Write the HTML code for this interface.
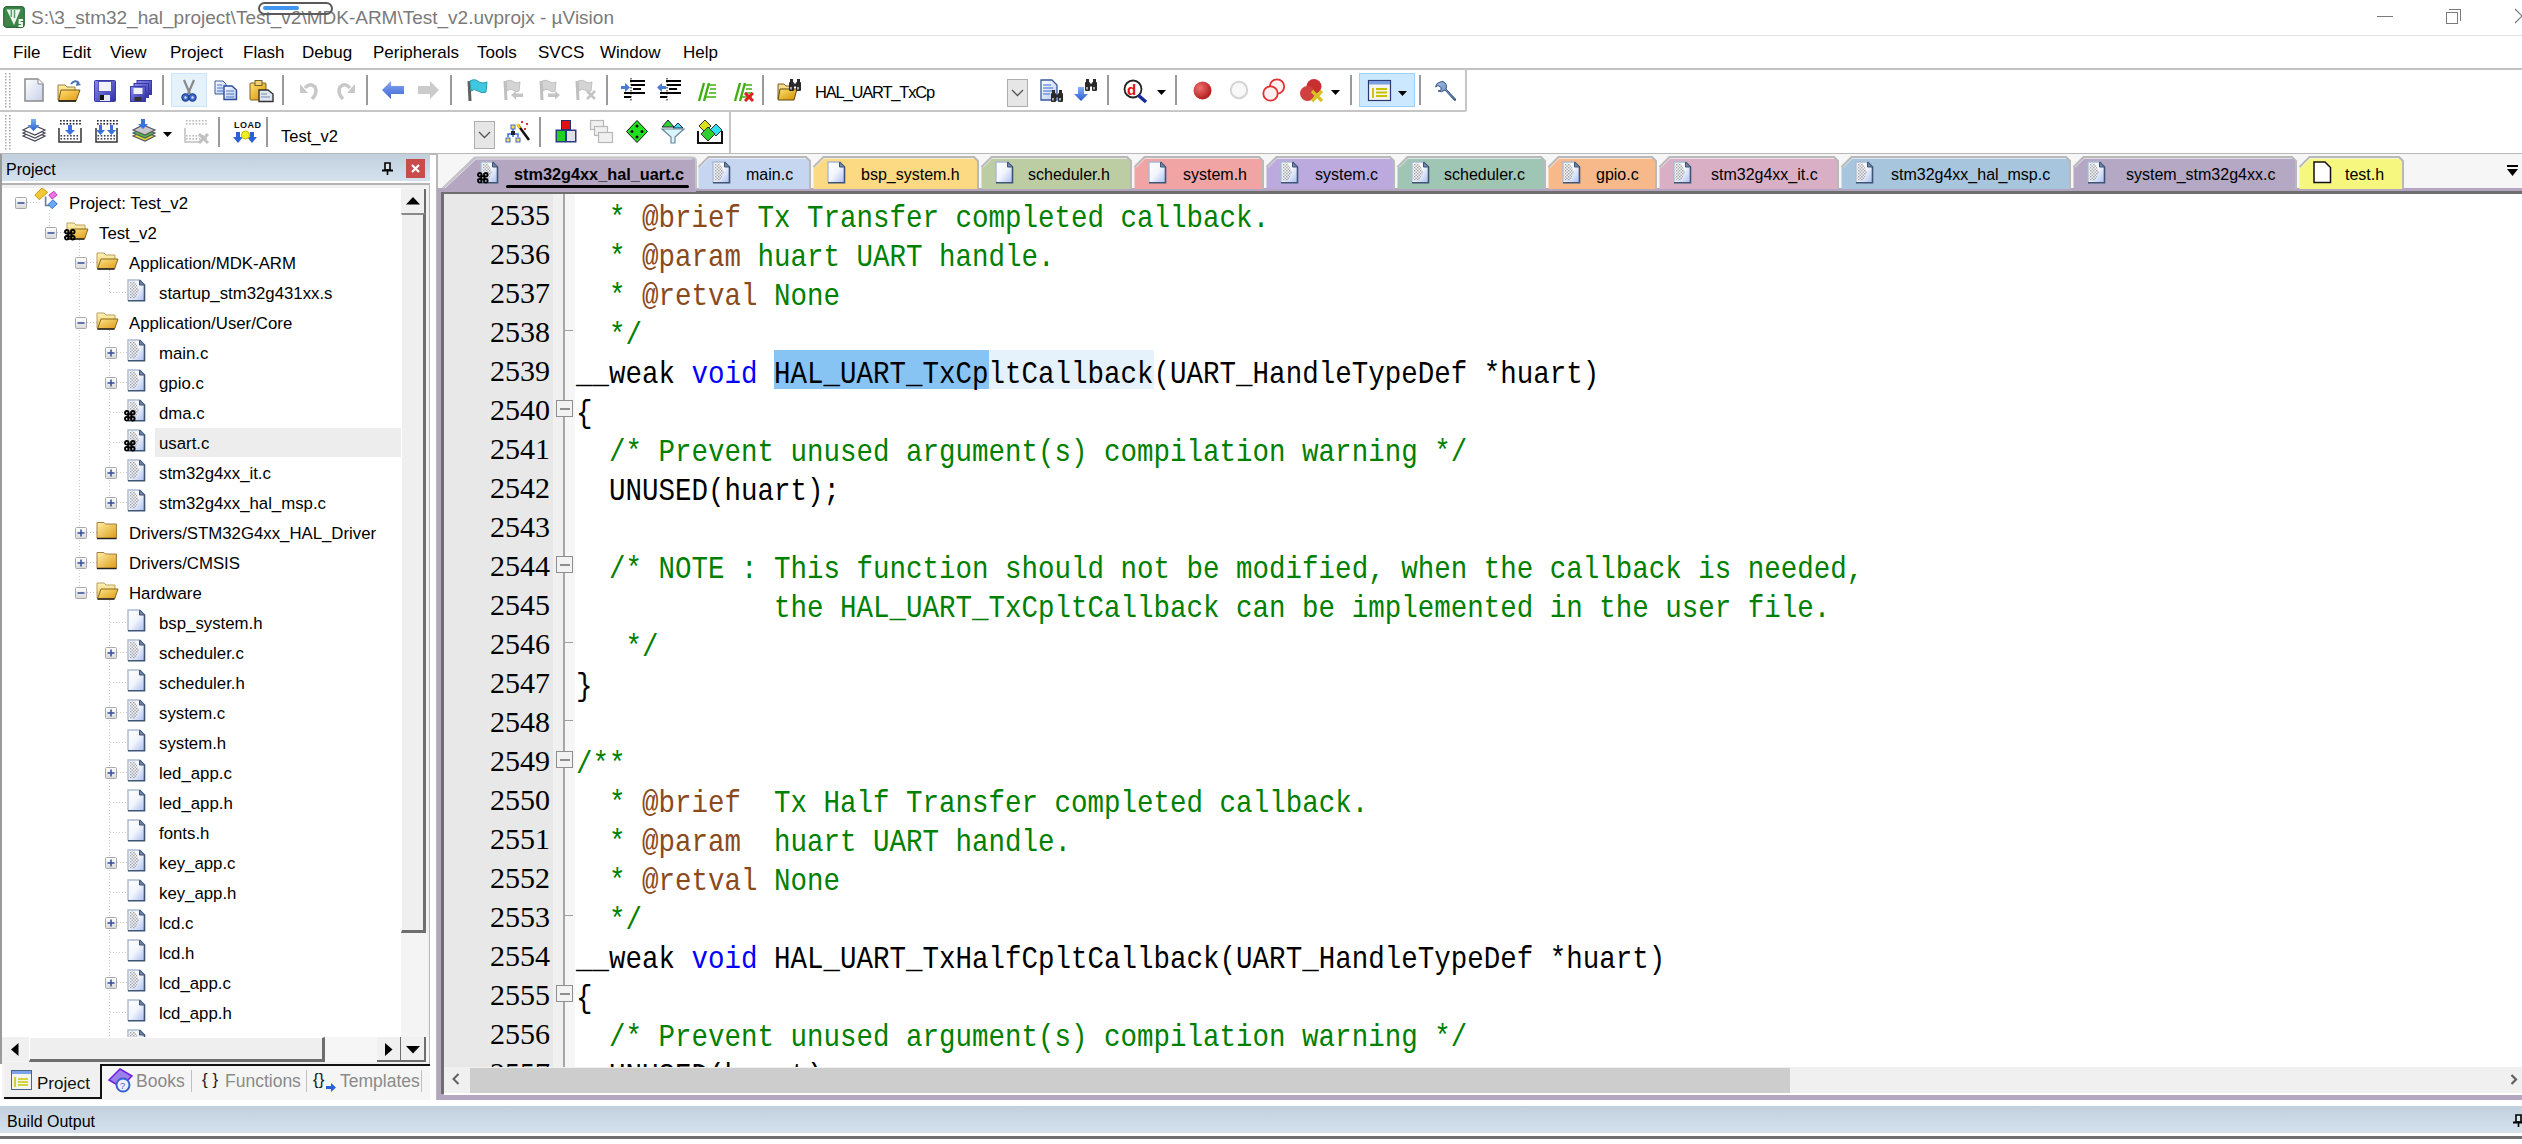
<!DOCTYPE html>
<html><head><meta charset="utf-8"><style>
*{box-sizing:border-box;margin:0;padding:0}
html,body{width:2522px;height:1144px;overflow:hidden;background:#fff}
body{position:relative;font-family:"Liberation Sans",sans-serif;color:#000}
.a{position:absolute}
.t{position:absolute;white-space:pre;line-height:1}
svg{position:absolute;overflow:visible}
.menu span{position:absolute;top:43px;font-size:17px;white-space:pre}
.hdr{background:linear-gradient(#c1cfdd,#d5e2ee)}
.ln{position:absolute;left:444px;width:106px;text-align:right;font-family:"Liberation Serif",serif;font-size:30px;line-height:39px;height:39px;white-space:pre}
.cl{position:absolute;left:576px;font-family:"Liberation Mono",monospace;font-size:30.5px;line-height:39px;height:39px;white-space:pre;transform:scaleX(0.90164);transform-origin:0 0}
.c{color:#008000}.d{color:#8b4a1c}.k{color:#0000ff}
.tr{position:absolute;font-size:16.8px;line-height:1;white-space:pre}
.tab{position:absolute;top:157px;height:32px}
.tabt{position:absolute;top:167px;font-size:16px;white-space:pre;line-height:1}
</style></head><body>
<svg width="0" height="0" style="position:absolute;left:0;top:0"><defs><linearGradient id="dg" x1="0" y1="0" x2="1" y2="1"><stop offset="0" stop-color="#ffffff"/><stop offset="0.5" stop-color="#f2f5fc"/><stop offset="1" stop-color="#a9bdf0"/></linearGradient><linearGradient id="eg" x1="0" y1="0" x2="0" y2="1"><stop offset="0" stop-color="#fff"/><stop offset="1" stop-color="#d8d8d8"/></linearGradient><linearGradient id="fg1" x1="0" y1="0" x2="0" y2="1"><stop offset="0" stop-color="#fff3b8"/><stop offset="1" stop-color="#e7c45c"/></linearGradient><linearGradient id="fg2" x1="0" y1="0" x2="1" y2="1"><stop offset="0" stop-color="#fde58a"/><stop offset="1" stop-color="#dd9a14"/></linearGradient><linearGradient id="fg3" x1="0" y1="0" x2="1" y2="1"><stop offset="0" stop-color="#fff0a8"/><stop offset="1" stop-color="#dd9a14"/></linearGradient><pattern id="dith" patternUnits="userSpaceOnUse" width="3" height="3"><rect x="0" y="0" width="1.4" height="1.4" fill="#a0a0a0"/><rect x="1.5" y="1.5" width="1.4" height="1.4" fill="#a0a0a0"/></pattern></defs></svg>
<div class="a" style="left:0;top:35px;width:2522px;height:1px;background:#e3e3e3"></div>
<svg style="left:3px;top:6px" width="22" height="22" viewBox="0 0 22 22"><rect x="0.7" y="0.7" width="20.6" height="20.6" rx="3" fill="#3a8548" stroke="#2c6a3a" stroke-width="1.2"/><path d="M3.5 3.5 H17.5 L11 19 Z" fill="#eef6ee"/><path d="M8.3 4 V11 M11.5 4 V12" stroke="#5f9f6c" stroke-width="1.5"/><path d="M20 14 H16.5 V17 H19 V20 H15.5" stroke="#f4faf4" stroke-width="1.8" fill="none"/></svg>
<div class="t" style="left:31px;top:8px;font-size:19px;color:#7a7a7a">S:\3_stm32_hal_project\Test_v2\MDK-ARM\Test_v2.uvprojx - µVision</div>
<div class="a" style="left:258px;top:2px;width:75px;height:13px;border:2px solid #5a5a5a;border-radius:7px;background:transparent"></div>
<div class="a" style="left:263px;top:6px;width:36px;height:4px;border-radius:2px;background:#3f96ef"></div>
<div class="a" style="left:2377px;top:16px;width:16px;height:1px;background:#7a7a7a"></div>
<div class="a" style="left:2446px;top:12px;width:12px;height:12px;border:1px solid #7a7a7a"></div>
<div class="a" style="left:2449px;top:9px;width:12px;height:12px;border-top:1px solid #7a7a7a;border-right:1px solid #7a7a7a"></div>
<svg style="left:2514px;top:8px" width="10" height="16"><path d="M1 1 L15 15 M1 15 L15 1" stroke="#7a7a7a" stroke-width="1.2"/></svg>
<div class="menu"><span style="left:13px">File</span><span style="left:62px">Edit</span><span style="left:110px">View</span><span style="left:170px">Project</span><span style="left:243px">Flash</span><span style="left:302px">Debug</span><span style="left:373px">Peripherals</span><span style="left:477px">Tools</span><span style="left:538px">SVCS</span><span style="left:600px">Window</span><span style="left:683px">Help</span></div>
<div class="a" style="left:0;top:68px;width:2522px;height:2px;background:#c2c2c2"></div>
<div class="a" style="left:0;top:110px;width:1466px;height:2px;background:#c6c6c6"></div>
<div class="a" style="left:1465px;top:69px;width:2px;height:42px;background:#c6c6c6"></div>
<div class="a" style="left:729px;top:111px;width:2px;height:42px;background:#c6c6c6"></div>
<div class="a" style="left:0;top:153px;width:2522px;height:2px;background:#b8b8b8"></div>
<svg style="left:5px;top:73px" width="6" height="36" viewBox="0 0 6 36"><rect x="0" y="0" width="1.5" height="1.5" fill="#a8a8a8"/><rect x="0" y="3" width="1.5" height="1.5" fill="#a8a8a8"/><rect x="0" y="6" width="1.5" height="1.5" fill="#a8a8a8"/><rect x="0" y="9" width="1.5" height="1.5" fill="#a8a8a8"/><rect x="0" y="12" width="1.5" height="1.5" fill="#a8a8a8"/><rect x="0" y="15" width="1.5" height="1.5" fill="#a8a8a8"/><rect x="0" y="18" width="1.5" height="1.5" fill="#a8a8a8"/><rect x="0" y="21" width="1.5" height="1.5" fill="#a8a8a8"/><rect x="0" y="24" width="1.5" height="1.5" fill="#a8a8a8"/><rect x="0" y="27" width="1.5" height="1.5" fill="#a8a8a8"/><rect x="0" y="30" width="1.5" height="1.5" fill="#a8a8a8"/><rect x="0" y="33" width="1.5" height="1.5" fill="#a8a8a8"/><rect x="4" y="0" width="1.5" height="1.5" fill="#a8a8a8"/><rect x="4" y="3" width="1.5" height="1.5" fill="#a8a8a8"/><rect x="4" y="6" width="1.5" height="1.5" fill="#a8a8a8"/><rect x="4" y="9" width="1.5" height="1.5" fill="#a8a8a8"/><rect x="4" y="12" width="1.5" height="1.5" fill="#a8a8a8"/><rect x="4" y="15" width="1.5" height="1.5" fill="#a8a8a8"/><rect x="4" y="18" width="1.5" height="1.5" fill="#a8a8a8"/><rect x="4" y="21" width="1.5" height="1.5" fill="#a8a8a8"/><rect x="4" y="24" width="1.5" height="1.5" fill="#a8a8a8"/><rect x="4" y="27" width="1.5" height="1.5" fill="#a8a8a8"/><rect x="4" y="30" width="1.5" height="1.5" fill="#a8a8a8"/><rect x="4" y="33" width="1.5" height="1.5" fill="#a8a8a8"/></svg>
<svg style="left:24px;top:78px" width="20" height="24" viewBox="0 0 20 24"><defs><linearGradient id="nd" x1="0" y1="0" x2="1" y2="1"><stop offset="0" stop-color="#ffffff"/><stop offset="1" stop-color="#c8d0ea"/></linearGradient></defs><path d="M1 1 H14 L19 6 V23 H1 Z" fill="url(#nd)" stroke="#8a8a8a" stroke-width="1.5"/><path d="M14 1 V6 H19" fill="#fff" stroke="#8a8a8a" stroke-width="1"/></svg>
<svg style="left:57px;top:79px" width="25" height="23" viewBox="0 0 25 23"><defs><linearGradient id="of1" x1="0" y1="0" x2="0" y2="1"><stop offset="0" stop-color="#fff2a0"/><stop offset="1" stop-color="#e8c050"/></linearGradient></defs><defs><linearGradient id="of2" x1="0" y1="0" x2="1" y2="1"><stop offset="0" stop-color="#ffe070"/><stop offset="1" stop-color="#e09810"/></linearGradient></defs><path d="M1 6 H8 L10 8 H18 V21 H1 Z" fill="url(#of1)" stroke="#9a8048"/><path d="M4 11 H23 L19 22 H1.5 Z" fill="url(#of2)" stroke="#7a5a20"/><path d="M1.5 22 H19" stroke="#111" stroke-width="1.5"/><path d="M14 5 Q18 0 22 4" stroke="#4a70b0" stroke-width="2" fill="none"/><path d="M20 2 L24 6 L19 7 Z" fill="#4a70b0"/></svg>
<svg style="left:94px;top:80px" width="22" height="22" viewBox="0 0 22 22"><defs><linearGradient id="sv" x1="0" y1="0" x2="1" y2="1"><stop offset="0" stop-color="#8a8af0"/><stop offset="1" stop-color="#3030a8"/></linearGradient></defs><rect x="0.5" y="0.5" width="21" height="21" rx="1" fill="url(#sv)" stroke="#3a3aa0"/><rect x="4.5" y="1.5" width="13" height="10" fill="#f0f2f8" stroke="#4040b0" stroke-width="0.8"/><rect x="6" y="15" width="10" height="6" fill="#e8e8f0"/><rect x="6" y="15" width="4" height="5" fill="#111"/></svg>
<svg style="left:130px;top:80px" width="22" height="22" viewBox="0 0 22 22"><defs><linearGradient id="sa" x1="0" y1="0" x2="1" y2="1"><stop offset="0" stop-color="#8a8af0"/><stop offset="1" stop-color="#3030a8"/></linearGradient></defs><rect x="7" y="0.5" width="14.5" height="14" fill="url(#sa)" stroke="#3a3aa0"/><rect x="4" y="3.5" width="14.5" height="14" fill="url(#sa)" stroke="#3a3aa0"/><rect x="0.5" y="6.5" width="15" height="15" fill="url(#sa)" stroke="#3a3aa0"/><rect x="3.5" y="8" width="9" height="6" fill="#f0f2f8"/><rect x="4.5" y="17" width="7" height="4" fill="#333"/></svg>
<div class="a" style="left:162px;top:75px;width:2px;height:30px;background:#9a9a9a"></div>
<div class="a" style="left:171px;top:73px;width:36px;height:34px;background:#e5f1fb;border:1px solid #cce4f7"></div>
<svg style="left:181px;top:79px" width="16" height="24" viewBox="0 0 16 24"><path d="M3 1 L9 15 M13 1 L7 15" stroke="#8a8a8a" stroke-width="2.2"/><circle cx="4.5" cy="18.5" r="3.6" fill="#3a6ad0" stroke="#1f3f90" stroke-width="1.2"/><circle cx="11.5" cy="18.5" r="3.6" fill="#3a6ad0" stroke="#1f3f90" stroke-width="1.2"/><circle cx="4.5" cy="18.5" r="1.2" fill="#dde"/><circle cx="11.5" cy="18.5" r="1.2" fill="#dde"/></svg>
<svg style="left:214px;top:80px" width="24" height="20" viewBox="0 0 24 20"><defs><linearGradient id="cp" x1="0" y1="0" x2="1" y2="1"><stop offset="0" stop-color="#ffffff"/><stop offset="1" stop-color="#b0c4ee"/></linearGradient></defs><path d="M1 1 H9 L12 4 V14 H1 Z" fill="url(#cp)" stroke="#3a5a9a"/><path d="M10 6 H18 L22.5 10 V19.5 H10 Z" fill="url(#cp)" stroke="#2a4a9a" stroke-width="1.4"/><path d="M3 5 H8 M3 8 H9 M3 11 H9 M12 11 H20 M12 14 H20 M12 17 H20" stroke="#4a7ad0" stroke-width="1.2"/></svg>
<svg style="left:249px;top:80px" width="25" height="22" viewBox="0 0 25 22"><defs><linearGradient id="ps" x1="0" y1="0" x2="1" y2="1"><stop offset="0" stop-color="#ffe070"/><stop offset="1" stop-color="#d89000"/></linearGradient></defs><rect x="1" y="3" width="16" height="17" rx="1" fill="url(#ps)" stroke="#806020"/><rect x="6" y="0.5" width="7" height="5" fill="#f0d070" stroke="#706030"/><path d="M10 10 H19 L24 14 V21.5 H10 Z" fill="#dfe6f2" stroke="#333" stroke-width="1.4"/><path d="M12 14 H18 M12 17 H21" stroke="#7a8aa8" stroke-width="1.2"/></svg>
<div class="a" style="left:282px;top:75px;width:2px;height:30px;background:#9a9a9a"></div>
<svg style="left:300px;top:80px" width="19" height="20" viewBox="0 0 19 20"><path d="M5 8 Q10 2 15 7 Q18 13 12 19" stroke="#c8c8c8" stroke-width="3.5" fill="none"/><path d="M0 4 V13 H8 Z" fill="#c8c8c8"/></svg>
<svg style="left:336px;top:80px" width="19" height="20" viewBox="0 0 19 20"><path d="M14 8 Q9 2 4 7 Q1 13 7 19" stroke="#c8c8c8" stroke-width="3.5" fill="none"/><path d="M19 4 V13 H11 Z" fill="#c8c8c8"/></svg>
<div class="a" style="left:366px;top:75px;width:2px;height:30px;background:#9a9a9a"></div>
<svg style="left:382px;top:81px" width="23" height="18" viewBox="0 0 23 18"><defs><linearGradient id="ba" x1="0" y1="0" x2="0" y2="1"><stop offset="0" stop-color="#8aa8f0"/><stop offset="1" stop-color="#3a66d8"/></linearGradient></defs><path d="M0 9 L9 0 V5 H22 V13 H9 V18 Z" fill="url(#ba)"/></svg>
<svg style="left:418px;top:81px" width="21" height="18" viewBox="0 0 21 18"><path d="M21 9 L12 0 V5 H0 V13 H12 V18 Z" fill="#cbcbcb"/></svg>
<div class="a" style="left:450px;top:75px;width:2px;height:30px;background:#9a9a9a"></div>
<svg style="left:466px;top:79px" width="22" height="23" viewBox="0 0 22 23"><path d="M3 2 L4 22" stroke="#606060" stroke-width="3"/><path d="M4 2 Q9 -1 13 3 Q17 5 21 3 L20 13 Q16 15 12 12 Q8 9 5 12 Z" fill="#40c8e0" stroke="#2898b0"/></svg>
<svg style="left:502px;top:79px" width="23" height="23" viewBox="0 0 23 23"><path d="M3 2 L4 21" stroke="#c0c0c0" stroke-width="3"/><path d="M4 2 Q9 0 12 3 Q15 5 18 3 L17 12 Q14 14 11 11 Q8 9 5 12 Z" fill="#d4d4d4" stroke="#c0c0c0"/><path d="M9 16 L14 12 V14.5 H21 V18 H14 V20.5 Z" fill="#c4c4c4"/></svg>
<svg style="left:538px;top:79px" width="23" height="23" viewBox="0 0 23 23"><path d="M3 2 L4 21" stroke="#c0c0c0" stroke-width="3"/><path d="M4 2 Q9 0 12 3 Q15 5 18 3 L17 12 Q14 14 11 11 Q8 9 5 12 Z" fill="#d4d4d4" stroke="#c0c0c0"/><path d="M22 16 L17 12 V14.5 H10 V18 H17 V20.5 Z" fill="#c4c4c4"/></svg>
<svg style="left:574px;top:79px" width="23" height="23" viewBox="0 0 23 23"><path d="M3 2 L4 21" stroke="#c0c0c0" stroke-width="3"/><path d="M4 2 Q9 0 12 3 Q15 5 18 3 L17 12 Q14 14 11 11 Q8 9 5 12 Z" fill="#d4d4d4" stroke="#c0c0c0"/><path d="M13 12 L21 20 M21 12 L13 20" stroke="#c4c4c4" stroke-width="2.5"/></svg>
<div class="a" style="left:606px;top:75px;width:2px;height:30px;background:#9a9a9a"></div>
<svg style="left:621px;top:78px" width="25" height="24" viewBox="0 0 25 24"><g stroke="#000" stroke-width="2"><path d="M9 3 H24 M10 7 H24 M12 11 H20 M3 15 H24 M3 19 H10"/></g><path d="M10 0 V23" stroke="#000" stroke-width="1" stroke-dasharray="1.5 1.5"/><path d="M0 8 H4 V5 L9 9.5 L4 14 V11 H0 Z" fill="#4a7ad8"/></svg>
<svg style="left:657px;top:78px" width="25" height="24" viewBox="0 0 25 24"><g stroke="#000" stroke-width="2"><path d="M9 3 H24 M10 7 H24 M12 11 H20 M3 15 H24 M3 19 H10"/></g><path d="M10 0 V23" stroke="#000" stroke-width="1" stroke-dasharray="1.5 1.5"/><path d="M9 8 H5 V5 L0 9.5 L5 14 V11 H9 Z" fill="#4a7ad8"/></svg>
<svg style="left:694px;top:80px" width="23" height="22" viewBox="0 0 23 22"><path d="M5 21 L10 3 M10 21 L15 3" stroke="#40b010" stroke-width="2.4"/><path d="M14 5 H22 M16 9 H22 M15 13 H22 M12 17 H22" stroke="#40b010" stroke-width="1.4"/></svg>
<svg style="left:730px;top:80px" width="24" height="22" viewBox="0 0 24 22"><path d="M5 21 L10 3 M10 21 L15 3" stroke="#40b010" stroke-width="2.4"/><path d="M14 5 H22 M16 9 H22 M15 13 H22 M12 17 H22" stroke="#40b010" stroke-width="1.4"/><path d="M15 13 L23 21 M23 13 L15 21" stroke="#e02020" stroke-width="3"/></svg>
<div class="a" style="left:762px;top:75px;width:2px;height:30px;background:#9a9a9a"></div>
<svg style="left:777px;top:79px" width="24" height="22" viewBox="0 0 24 22"><defs><linearGradient id="ff" x1="0" y1="0" x2="1" y2="1"><stop offset="0" stop-color="#ffe070"/><stop offset="1" stop-color="#d09000"/></linearGradient></defs><path d="M1 5 H7 L9 7 H16 V20 H1 Z" fill="#f4dc90" stroke="#806020"/><path d="M3 10 H20 L17 21 H1 Z" fill="url(#ff)" stroke="#604810"/><g transform="translate(12,0)"><g fill="#2a2a2a"><rect x="0" y="3" width="5" height="9" rx="1"/><rect x="7" y="3" width="5" height="9" rx="1"/><rect x="1" y="0" width="3" height="3.5"/><rect x="8" y="0" width="3" height="3.5"/><rect x="4.5" y="4.5" width="3" height="3"/></g><g fill="#c8c8c8"><rect x="1.2" y="8" width="1.6" height="2.5"/><rect x="8.2" y="8" width="1.6" height="2.5"/></g></g></svg>
<div class="t" style="left:815px;top:84px;font-size:16.5px;letter-spacing:-1.2px">HAL_UART_TxCp</div>
<div class="a" style="left:1007px;top:79px;width:21px;height:28px;background:#e6e6e6;border:1px solid #adadad"></div>
<svg style="left:1011px;top:89px" width="13" height="8" viewBox="0 0 13 8"><path d="M1 1 L6.5 6.5 L12 1" stroke="#555" stroke-width="1.3" fill="none"/></svg>
<svg style="left:1040px;top:79px" width="23" height="23" viewBox="0 0 23 23"><defs><linearGradient id="fd" x1="0" y1="0" x2="1" y2="1"><stop offset="0" stop-color="#ffffff"/><stop offset="1" stop-color="#b8c8ee"/></linearGradient></defs><path d="M1 1 H12 L17 6 V21 H1 Z" fill="url(#fd)" stroke="#3a5a9a" stroke-width="1.3"/><path d="M3 6 H11 M3 9 H13 M3 12 H13 M3 15 H10" stroke="#3a6ad8" stroke-width="1.2"/><g transform="translate(11,11)"><g fill="#2a2a2a"><rect x="0" y="3" width="5" height="9" rx="1"/><rect x="7" y="3" width="5" height="9" rx="1"/><rect x="1" y="0" width="3" height="3.5"/><rect x="8" y="0" width="3" height="3.5"/><rect x="4.5" y="4.5" width="3" height="3"/></g><g fill="#c8c8c8"><rect x="1.2" y="8" width="1.6" height="2.5"/><rect x="8.2" y="8" width="1.6" height="2.5"/></g></g></svg>
<svg style="left:1074px;top:79px" width="24" height="22" viewBox="0 0 24 22"><defs><linearGradient id="fa" x1="0" y1="0" x2="0" y2="1"><stop offset="0" stop-color="#8ab0f8"/><stop offset="1" stop-color="#2a5ad0"/></linearGradient></defs><path d="M4 8 H10 V15 H14 L7 22 L0 15 H4 Z" fill="url(#fa)"/><g transform="translate(11,0)"><g fill="#2a2a2a"><rect x="0" y="3" width="5" height="9" rx="1"/><rect x="7" y="3" width="5" height="9" rx="1"/><rect x="1" y="0" width="3" height="3.5"/><rect x="8" y="0" width="3" height="3.5"/><rect x="4.5" y="4.5" width="3" height="3"/></g><g fill="#c8c8c8"><rect x="1.2" y="8" width="1.6" height="2.5"/><rect x="8.2" y="8" width="1.6" height="2.5"/></g></g></svg>
<div class="a" style="left:1107px;top:75px;width:2px;height:30px;background:#9a9a9a"></div>
<svg style="left:1123px;top:79px" width="25" height="25" viewBox="0 0 25 25"><circle cx="10" cy="10" r="8.5" fill="#fff" stroke="#222" stroke-width="1.8"/><text x="4" y="16" font-family="Liberation Sans" font-weight="bold" font-size="15" fill="#e01010">d</text><path d="M15 16 L23 23" stroke="#1a2a9a" stroke-width="3.5"/></svg>
<svg style="left:1157px;top:90px" width="9" height="5" viewBox="0 0 9 5"><path d="M0 0 H9 L4.5 5 Z" fill="#000"/></svg>
<div class="a" style="left:1175px;top:75px;width:2px;height:30px;background:#9a9a9a"></div>
<svg style="left:1192px;top:80px" width="21" height="21" viewBox="0 0 21 21"><defs><radialGradient id="rb" cx="0.35" cy="0.35" r="0.7"><stop offset="0" stop-color="#f07070"/><stop offset="1" stop-color="#b01818"/></radialGradient></defs><circle cx="10.5" cy="10.5" r="9" fill="url(#rb)"/></svg>
<svg style="left:1229px;top:80px" width="20" height="20" viewBox="0 0 20 20"><circle cx="10" cy="10" r="8.2" fill="#f8f8f8" stroke="#d4d4d4" stroke-width="2"/></svg>
<svg style="left:1262px;top:78px" width="24" height="24" viewBox="0 0 24 24"><circle cx="15" cy="8.5" r="7.2" fill="#fdf0f0" stroke="#e03030" stroke-width="1.8"/><circle cx="8.5" cy="15.5" r="7.2" fill="#fdf0f0" stroke="#e03030" stroke-width="1.8"/></svg>
<svg style="left:1299px;top:78px" width="25" height="25" viewBox="0 0 25 25"><circle cx="15" cy="8.5" r="7.5" fill="#c83030"/><circle cx="8.5" cy="15.5" r="7.5" fill="#d04040"/><path d="M13 13 L23 23 M23 13 L13 23" stroke="#d8c020" stroke-width="3.2"/></svg>
<svg style="left:1331px;top:90px" width="9" height="5" viewBox="0 0 9 5"><path d="M0 0 H9 L4.5 5 Z" fill="#000"/></svg>
<div class="a" style="left:1350px;top:75px;width:2px;height:30px;background:#9a9a9a"></div>
<div class="a" style="left:1359px;top:73px;width:56px;height:34px;background:#cce8ff;border:1px solid #99d1ff"></div>
<svg style="left:1368px;top:80px" width="23" height="21" viewBox="0 0 23 21"><rect x="0.5" y="0.5" width="22" height="20" fill="#f6f6ee" stroke="#2a3a70" stroke-width="1.2"/><rect x="1" y="1" width="21" height="3.5" fill="#7aa0e0"/><path d="M5 8 V18 M8 9 H19 M8 12.5 H19 M8 16 H19" stroke="#c8c000" stroke-width="1.8"/></svg>
<svg style="left:1398px;top:91px" width="9" height="5" viewBox="0 0 9 5"><path d="M0 0 H9 L4.5 5 Z" fill="#000"/></svg>
<div class="a" style="left:1419px;top:75px;width:2px;height:30px;background:#9a9a9a"></div>
<svg style="left:1434px;top:80px" width="23" height="22" viewBox="0 0 23 22"><defs><linearGradient id="wr" x1="0" y1="0" x2="1" y2="1"><stop offset="0" stop-color="#a0c0e8"/><stop offset="1" stop-color="#4a6a98"/></linearGradient></defs><path d="M6 2 Q2 3 1.5 7 L4 5.5 L7 7.5 L7 10 L4 11 Q8 13 11 10 L20 20 Q22 21.5 21.5 19 L12 9 Q14 4 9 1.5 Z" fill="url(#wr)" stroke="#3a5a88" stroke-width="1"/></svg>
<svg style="left:5px;top:115px" width="6" height="36" viewBox="0 0 6 36"><rect x="0" y="0" width="1.5" height="1.5" fill="#a8a8a8"/><rect x="0" y="3" width="1.5" height="1.5" fill="#a8a8a8"/><rect x="0" y="6" width="1.5" height="1.5" fill="#a8a8a8"/><rect x="0" y="9" width="1.5" height="1.5" fill="#a8a8a8"/><rect x="0" y="12" width="1.5" height="1.5" fill="#a8a8a8"/><rect x="0" y="15" width="1.5" height="1.5" fill="#a8a8a8"/><rect x="0" y="18" width="1.5" height="1.5" fill="#a8a8a8"/><rect x="0" y="21" width="1.5" height="1.5" fill="#a8a8a8"/><rect x="0" y="24" width="1.5" height="1.5" fill="#a8a8a8"/><rect x="0" y="27" width="1.5" height="1.5" fill="#a8a8a8"/><rect x="0" y="30" width="1.5" height="1.5" fill="#a8a8a8"/><rect x="0" y="33" width="1.5" height="1.5" fill="#a8a8a8"/><rect x="4" y="0" width="1.5" height="1.5" fill="#a8a8a8"/><rect x="4" y="3" width="1.5" height="1.5" fill="#a8a8a8"/><rect x="4" y="6" width="1.5" height="1.5" fill="#a8a8a8"/><rect x="4" y="9" width="1.5" height="1.5" fill="#a8a8a8"/><rect x="4" y="12" width="1.5" height="1.5" fill="#a8a8a8"/><rect x="4" y="15" width="1.5" height="1.5" fill="#a8a8a8"/><rect x="4" y="18" width="1.5" height="1.5" fill="#a8a8a8"/><rect x="4" y="21" width="1.5" height="1.5" fill="#a8a8a8"/><rect x="4" y="24" width="1.5" height="1.5" fill="#a8a8a8"/><rect x="4" y="27" width="1.5" height="1.5" fill="#a8a8a8"/><rect x="4" y="30" width="1.5" height="1.5" fill="#a8a8a8"/><rect x="4" y="33" width="1.5" height="1.5" fill="#a8a8a8"/></svg>
<svg style="left:22px;top:119px" width="24" height="25" viewBox="0 0 24 25"><defs><linearGradient id="bl" x1="0" y1="0" x2="0" y2="1"><stop offset="0" stop-color="#7ab0f8"/><stop offset="1" stop-color="#2a60d0"/></linearGradient></defs><g fill="#fff" stroke="#445" stroke-width="1.2"><path d="M1 17 L11 12 L23 17 L13 22 Z"/><path d="M1 14 L11 9 L23 14 L13 19 Z"/><path d="M1 11 L11 6 L23 11 L13 16 Z"/></g><path d="M9 0 H14 V6 H17.5 L11.5 12 L5.5 6 H9 Z" fill="url(#bl)"/></svg>
<svg style="left:58px;top:120px" width="24" height="23" viewBox="0 0 24 23"><rect x="2.0" y="0" width="1.6" height="1.6" fill="#223"/><rect x="2.0" y="3" width="1.6" height="1.6" fill="#223"/><rect x="5.2" y="0" width="1.6" height="1.6" fill="#223"/><rect x="5.2" y="3" width="1.6" height="1.6" fill="#223"/><rect x="8.4" y="0" width="1.6" height="1.6" fill="#223"/><rect x="8.4" y="3" width="1.6" height="1.6" fill="#223"/><rect x="11.600000000000001" y="0" width="1.6" height="1.6" fill="#223"/><rect x="11.600000000000001" y="3" width="1.6" height="1.6" fill="#223"/><rect x="14.8" y="0" width="1.6" height="1.6" fill="#223"/><rect x="14.8" y="3" width="1.6" height="1.6" fill="#223"/><rect x="18.0" y="0" width="1.6" height="1.6" fill="#223"/><rect x="18.0" y="3" width="1.6" height="1.6" fill="#223"/><rect x="21.200000000000003" y="0" width="1.6" height="1.6" fill="#223"/><rect x="21.200000000000003" y="3" width="1.6" height="1.6" fill="#223"/><rect x="2.5" y="15" width="1.6" height="1.6" fill="#445"/><rect x="2.5" y="18" width="1.6" height="1.6" fill="#445"/><rect x="5.7" y="15" width="1.6" height="1.6" fill="#445"/><rect x="5.7" y="18" width="1.6" height="1.6" fill="#445"/><rect x="8.9" y="15" width="1.6" height="1.6" fill="#445"/><rect x="8.9" y="18" width="1.6" height="1.6" fill="#445"/><rect x="12.100000000000001" y="15" width="1.6" height="1.6" fill="#445"/><rect x="12.100000000000001" y="18" width="1.6" height="1.6" fill="#445"/><rect x="15.3" y="15" width="1.6" height="1.6" fill="#445"/><rect x="15.3" y="18" width="1.6" height="1.6" fill="#445"/><rect x="18.5" y="15" width="1.6" height="1.6" fill="#445"/><rect x="18.5" y="18" width="1.6" height="1.6" fill="#445"/><path d="M1 8 V22 H23 V8" stroke="#333" stroke-width="1.5" fill="none"/><path d="M10 5 H14 V10 H17 L12 15 L7 10 H10 Z" fill="#3a70e0"/></svg>
<svg style="left:95px;top:120px" width="23" height="23" viewBox="0 0 23 23"><rect x="2.0" y="0" width="1.6" height="1.6" fill="#223"/><rect x="2.0" y="3" width="1.6" height="1.6" fill="#223"/><rect x="5.2" y="0" width="1.6" height="1.6" fill="#223"/><rect x="5.2" y="3" width="1.6" height="1.6" fill="#223"/><rect x="8.4" y="0" width="1.6" height="1.6" fill="#223"/><rect x="8.4" y="3" width="1.6" height="1.6" fill="#223"/><rect x="11.600000000000001" y="0" width="1.6" height="1.6" fill="#223"/><rect x="11.600000000000001" y="3" width="1.6" height="1.6" fill="#223"/><rect x="14.8" y="0" width="1.6" height="1.6" fill="#223"/><rect x="14.8" y="3" width="1.6" height="1.6" fill="#223"/><rect x="18.0" y="0" width="1.6" height="1.6" fill="#223"/><rect x="18.0" y="3" width="1.6" height="1.6" fill="#223"/><rect x="21.200000000000003" y="0" width="1.6" height="1.6" fill="#223"/><rect x="21.200000000000003" y="3" width="1.6" height="1.6" fill="#223"/><rect x="2.5" y="15" width="1.6" height="1.6" fill="#445"/><rect x="2.5" y="18" width="1.6" height="1.6" fill="#445"/><rect x="5.7" y="15" width="1.6" height="1.6" fill="#445"/><rect x="5.7" y="18" width="1.6" height="1.6" fill="#445"/><rect x="8.9" y="15" width="1.6" height="1.6" fill="#445"/><rect x="8.9" y="18" width="1.6" height="1.6" fill="#445"/><rect x="12.100000000000001" y="15" width="1.6" height="1.6" fill="#445"/><rect x="12.100000000000001" y="18" width="1.6" height="1.6" fill="#445"/><rect x="15.3" y="15" width="1.6" height="1.6" fill="#445"/><rect x="15.3" y="18" width="1.6" height="1.6" fill="#445"/><rect x="18.5" y="15" width="1.6" height="1.6" fill="#445"/><rect x="18.5" y="18" width="1.6" height="1.6" fill="#445"/><path d="M1 8 V22 H22 V8" stroke="#333" stroke-width="1.5" fill="none"/><path d="M4 5 H7 V10 H10 L5.5 15 L1 10 H4 Z M15 5 H18 V10 H21 L16.5 15 L12 10 H15 Z" fill="#3a70e0"/></svg>
<svg style="left:132px;top:119px" width="24" height="25" viewBox="0 0 24 25"><path d="M1 17 L11 12 L23 17 L13 22 Z" fill="#e8e030" stroke="#556" stroke-width="1.2"/><path d="M1 14 L11 9 L23 14 L13 19 Z" fill="#50c040" stroke="#556" stroke-width="1.2"/><path d="M1 11 L11 6 L23 11 L13 16 Z" fill="#c8c8c8" stroke="#556" stroke-width="1.2"/><path d="M9 0 H13 V5 H16 L11 10 L6 5 H9 Z" fill="#3a70e0"/></svg>
<svg style="left:163px;top:132px" width="9" height="5" viewBox="0 0 9 5"><path d="M0 0 H9 L4.5 5 Z" fill="#000"/></svg>
<svg style="left:184px;top:120px" width="26" height="24" viewBox="0 0 26 24"><rect x="2.0" y="0" width="1.6" height="1.6" fill="#bbb"/><rect x="2.0" y="3" width="1.6" height="1.6" fill="#bbb"/><rect x="2.0" y="15" width="1.6" height="1.6" fill="#bbb"/><rect x="2.0" y="18" width="1.6" height="1.6" fill="#bbb"/><rect x="5.2" y="0" width="1.6" height="1.6" fill="#bbb"/><rect x="5.2" y="3" width="1.6" height="1.6" fill="#bbb"/><rect x="5.2" y="15" width="1.6" height="1.6" fill="#bbb"/><rect x="5.2" y="18" width="1.6" height="1.6" fill="#bbb"/><rect x="8.4" y="0" width="1.6" height="1.6" fill="#bbb"/><rect x="8.4" y="3" width="1.6" height="1.6" fill="#bbb"/><rect x="8.4" y="15" width="1.6" height="1.6" fill="#bbb"/><rect x="8.4" y="18" width="1.6" height="1.6" fill="#bbb"/><rect x="11.600000000000001" y="0" width="1.6" height="1.6" fill="#bbb"/><rect x="11.600000000000001" y="3" width="1.6" height="1.6" fill="#bbb"/><rect x="11.600000000000001" y="15" width="1.6" height="1.6" fill="#bbb"/><rect x="11.600000000000001" y="18" width="1.6" height="1.6" fill="#bbb"/><rect x="14.8" y="0" width="1.6" height="1.6" fill="#bbb"/><rect x="14.8" y="3" width="1.6" height="1.6" fill="#bbb"/><rect x="14.8" y="15" width="1.6" height="1.6" fill="#bbb"/><rect x="14.8" y="18" width="1.6" height="1.6" fill="#bbb"/><rect x="18.0" y="0" width="1.6" height="1.6" fill="#bbb"/><rect x="18.0" y="3" width="1.6" height="1.6" fill="#bbb"/><rect x="18.0" y="15" width="1.6" height="1.6" fill="#bbb"/><rect x="18.0" y="18" width="1.6" height="1.6" fill="#bbb"/><rect x="21.200000000000003" y="0" width="1.6" height="1.6" fill="#bbb"/><rect x="21.200000000000003" y="3" width="1.6" height="1.6" fill="#bbb"/><rect x="21.200000000000003" y="15" width="1.6" height="1.6" fill="#bbb"/><rect x="21.200000000000003" y="18" width="1.6" height="1.6" fill="#bbb"/><path d="M1 8 V22 H16" stroke="#c0c0c0" stroke-width="1.5" fill="none"/><path d="M15 14 L24 23 M24 14 L15 23" stroke="#c0c0c0" stroke-width="3"/></svg>
<div class="a" style="left:218px;top:117px;width:2px;height:30px;background:#9a9a9a"></div>
<svg style="left:233px;top:120px" width="25" height="24" viewBox="0 0 25 24"><text x="1" y="8" font-family="Liberation Sans" font-weight="bold" font-size="9" fill="#111" letter-spacing="0.5">LOAD</text><path d="M3 12 H7 V17 H10 L5 23 L0 17 H3 Z M17 12 H21 V17 H24 L19 23 L14 17 H17 Z" fill="#2a60d8"/><circle cx="12.5" cy="15" r="4" fill="#f0f020" stroke="#c8b800"/></svg>
<div class="a" style="left:266px;top:117px;width:2px;height:30px;background:#9a9a9a"></div>
<div class="t" style="left:281px;top:128px;font-size:16.5px">Test_v2</div>
<div class="a" style="left:474px;top:121px;width:21px;height:28px;background:#e6e6e6;border:1px solid #adadad"></div>
<svg style="left:478px;top:131px" width="13" height="8" viewBox="0 0 13 8"><path d="M1 1 L6.5 6.5 L12 1" stroke="#555" stroke-width="1.3" fill="none"/></svg>
<svg style="left:505px;top:120px" width="26" height="23" viewBox="0 0 26 23"><path d="M13 5 L24 20" stroke="#111" stroke-width="2.5"/><path d="M12 4 L15 8" stroke="#f0d020" stroke-width="2.5"/><g fill="#e03030"><rect x="16" y="1" width="2" height="2"/><rect x="21" y="3" width="2" height="2"/><rect x="19" y="8" width="2" height="2"/></g><path d="M8 7 V12 M3 17 V14 H13 V17 M8 12 V17" stroke="#3a6ad8" stroke-width="1.5" fill="none"/><g fill="#ffe040" stroke="#3a6ad8"><rect x="6" y="5" width="4" height="4"/><rect x="1" y="18" width="4" height="4"/><rect x="11" y="18" width="4" height="4"/></g><rect x="6" y="11" width="4" height="4" fill="#223"/></svg>
<div class="a" style="left:539px;top:117px;width:2px;height:30px;background:#9a9a9a"></div>
<svg style="left:555px;top:120px" width="22" height="23" viewBox="0 0 22 23"><rect x="6.5" y="0.5" width="9" height="9" fill="#e01010" stroke="#203070"/><rect x="0.5" y="9.5" width="21" height="13" fill="#2a3a80"/><rect x="2" y="11" width="8" height="10" fill="#20d020"/><rect x="12" y="11" width="8" height="10" fill="#e0e0e8"/></svg>
<svg style="left:590px;top:120px" width="23" height="23" viewBox="0 0 23 23"><g fill="#f0f0f0" stroke="#b8b8b8" stroke-width="1.2"><rect x="0.5" y="0.5" width="13" height="9"/><rect x="4.5" y="6.5" width="13" height="9"/><rect x="8.5" y="12.5" width="14" height="10"/></g></svg>
<svg style="left:626px;top:120px" width="22" height="23" viewBox="0 0 22 23"><path d="M11 0.5 L21.5 11.5 L11 22.5 L0.5 11.5 Z" fill="#20e020" stroke="#111" stroke-width="1"/><g fill="#111"><circle cx="11" cy="6" r="1.5"/><circle cx="6" cy="11.5" r="1.5"/><circle cx="16" cy="11.5" r="1.5"/><circle cx="11" cy="17" r="1.5"/></g></svg>
<svg style="left:661px;top:119px" width="24" height="25" viewBox="0 0 24 25"><path d="M7 1 L13 8 L1 8 Z" fill="#30d030" stroke="#224"/><path d="M17 4 L22 9 L12 9 Z" fill="#40e0f0" stroke="#224"/><path d="M1 10 H23 L14 18 V24 H10 V18 Z" fill="#d8f4fc" stroke="#6a8898" stroke-width="1.2"/></svg>
<svg style="left:697px;top:119px" width="26" height="25" viewBox="0 0 26 25"><path d="M1 12 V24 H25 V12" stroke="#111" stroke-width="2" fill="none"/><path d="M8 1 L14 7 L8 13 L2 7 Z" fill="#d8e020" stroke="#333"/><path d="M19 5 L25 11 L19 17 L13 11 Z" fill="#30e0f0" stroke="#333"/><path d="M11 8 L18 15 L11 22 L4 15 Z" fill="#30d030" stroke="#333"/></svg>
<div class="a" style="left:0;top:154px;width:2px;height:910px;background:#9a9a9a"></div>
<div class="a hdr" style="left:2px;top:154px;width:428px;height:27px"></div>
<div class="t" style="left:6px;top:162px;font-size:16px">Project</div>
<div class="a" style="left:406px;top:159px;width:19px;height:19px;background:#c84c4c"></div>
<svg style="left:411px;top:164px" width="9" height="9" viewBox="0 0 9 9"><path d="M1 1 L8 8 M8 1 L1 8" stroke="#fff" stroke-width="2.2"/></svg>
<svg style="left:382px;top:162px" width="11" height="13" viewBox="0 0 11 13"><path d="M3 1 H8 V8 H3 Z" fill="#dde6f0" stroke="#000" stroke-width="1.6"/><path d="M0 8.5 H11" stroke="#000" stroke-width="2"/><path d="M5.5 9 V13" stroke="#000" stroke-width="1.6"/></svg>
<div class="a" style="left:2px;top:183px;width:428px;height:2px;background:#b4b4b4"></div>
<div class="a" style="left:2px;top:185px;width:428px;height:880px;background:#f0f0f0"></div>
<div class="a" style="left:2px;top:188px;width:399px;height:849px;background:#fff"></div>
<div class="a" style="left:429px;top:185px;width:1px;height:880px;background:#b8b8b8"></div>
<div class="a" style="left:436px;top:154px;width:2086px;height:946px;background:#f6f6f6"></div>
<div class="a" style="left:436px;top:154px;width:2px;height:946px;background:#b8b8b8"></div>
<div class="a" style="left:437px;top:188px;width:2085px;height:912px;background:#b4a6c0"></div>
<div class="a" style="left:441px;top:191px;width:2081px;height:903px;background:#fff;border-left:3px solid #6e6e6e;border-top:3px solid #6e6e6e"></div>
<div class="a" style="left:444px;top:194px;width:109px;height:873px;background:#e8e8e8"></div>
<div class="a" style="left:553px;top:194px;width:10px;height:873px;background:#f0f0f0"></div>
<div class="a" style="left:565px;top:194px;width:10px;height:873px;background:#f6f6f6"></div>
<div class="a" style="left:563px;top:194px;width:2px;height:873px;background:#a6a6a6"></div>
<div class="a" style="left:774.0px;top:350px;width:379.5px;height:39px;background:#e5f1fb"></div>
<div class="a" style="left:774.0px;top:350px;width:214.5px;height:39px;background:#87c4f4"></div>
<div class="a" style="left:444px;top:194px;width:2078px;height:873px;overflow:hidden">
<div class="ln" style="left:0;top:1px">2535</div>
<div class="cl" style="left:132px;top:6px"><span class="c">  * </span><span class="d">@brief</span><span class="c"> Tx Transfer completed callback.</span></div>
<div class="ln" style="left:0;top:40px">2536</div>
<div class="cl" style="left:132px;top:45px"><span class="c">  * </span><span class="d">@param</span><span class="c"> huart UART handle.</span></div>
<div class="ln" style="left:0;top:79px">2537</div>
<div class="cl" style="left:132px;top:84px"><span class="c">  * </span><span class="d">@retval</span><span class="c"> None</span></div>
<div class="ln" style="left:0;top:118px">2538</div>
<div class="cl" style="left:132px;top:123px"><span class="c">  */</span></div>
<div class="ln" style="left:0;top:157px">2539</div>
<div class="cl" style="left:132px;top:162px">__weak <span class="k">void</span> HAL_UART_TxCpltCallback(UART_HandleTypeDef *huart)</div>
<div class="ln" style="left:0;top:196px">2540</div>
<div class="cl" style="left:132px;top:201px">{</div>
<div class="ln" style="left:0;top:235px">2541</div>
<div class="cl" style="left:132px;top:240px"><span class="c">  /* Prevent unused argument(s) compilation warning */</span></div>
<div class="ln" style="left:0;top:274px">2542</div>
<div class="cl" style="left:132px;top:279px">  UNUSED(huart);</div>
<div class="ln" style="left:0;top:313px">2543</div>
<div class="cl" style="left:132px;top:318px"></div>
<div class="ln" style="left:0;top:352px">2544</div>
<div class="cl" style="left:132px;top:357px"><span class="c">  /* NOTE : This function should not be modified, when the callback is needed,</span></div>
<div class="ln" style="left:0;top:391px">2545</div>
<div class="cl" style="left:132px;top:396px"><span class="c">            the HAL_UART_TxCpltCallback can be implemented in the user file.</span></div>
<div class="ln" style="left:0;top:430px">2546</div>
<div class="cl" style="left:132px;top:435px"><span class="c">   */</span></div>
<div class="ln" style="left:0;top:469px">2547</div>
<div class="cl" style="left:132px;top:474px">}</div>
<div class="ln" style="left:0;top:508px">2548</div>
<div class="cl" style="left:132px;top:513px"></div>
<div class="ln" style="left:0;top:547px">2549</div>
<div class="cl" style="left:132px;top:552px"><span class="c">/**</span></div>
<div class="ln" style="left:0;top:586px">2550</div>
<div class="cl" style="left:132px;top:591px"><span class="c">  * </span><span class="d">@brief</span><span class="c">  Tx Half Transfer completed callback.</span></div>
<div class="ln" style="left:0;top:625px">2551</div>
<div class="cl" style="left:132px;top:630px"><span class="c">  * </span><span class="d">@param</span><span class="c">  huart UART handle.</span></div>
<div class="ln" style="left:0;top:664px">2552</div>
<div class="cl" style="left:132px;top:669px"><span class="c">  * </span><span class="d">@retval</span><span class="c"> None</span></div>
<div class="ln" style="left:0;top:703px">2553</div>
<div class="cl" style="left:132px;top:708px"><span class="c">  */</span></div>
<div class="ln" style="left:0;top:742px">2554</div>
<div class="cl" style="left:132px;top:747px">__weak <span class="k">void</span> HAL_UART_TxHalfCpltCallback(UART_HandleTypeDef *huart)</div>
<div class="ln" style="left:0;top:781px">2555</div>
<div class="cl" style="left:132px;top:786px">{</div>
<div class="ln" style="left:0;top:820px">2556</div>
<div class="cl" style="left:132px;top:825px"><span class="c">  /* Prevent unused argument(s) compilation warning */</span></div>
<div class="ln" style="left:0;top:859px">2557</div>
<div class="cl" style="left:132px;top:864px">  UNUSED(huart);</div>
</div>
<div class="a" style="left:556px;top:400px;width:17px;height:17px;border:1.5px solid #8e8e8e;background:#f2f2f2"></div><div class="a" style="left:560px;top:408px;width:10px;height:1.5px;background:#8e8e8e"></div>
<div class="a" style="left:556px;top:556px;width:17px;height:17px;border:1.5px solid #8e8e8e;background:#f2f2f2"></div><div class="a" style="left:560px;top:564px;width:10px;height:1.5px;background:#8e8e8e"></div>
<div class="a" style="left:556px;top:751px;width:17px;height:17px;border:1.5px solid #8e8e8e;background:#f2f2f2"></div><div class="a" style="left:560px;top:759px;width:10px;height:1.5px;background:#8e8e8e"></div>
<div class="a" style="left:556px;top:985px;width:17px;height:17px;border:1.5px solid #8e8e8e;background:#f2f2f2"></div><div class="a" style="left:560px;top:993px;width:10px;height:1.5px;background:#8e8e8e"></div>
<div class="a" style="left:564px;top:330px;width:9px;height:1px;background:#a0a0a0"></div>
<div class="a" style="left:564px;top:642px;width:9px;height:1px;background:#a0a0a0"></div>
<div class="a" style="left:564px;top:720px;width:9px;height:1px;background:#a0a0a0"></div>
<div class="a" style="left:564px;top:915px;width:9px;height:1px;background:#a0a0a0"></div>
<div class="a" style="left:444px;top:1067px;width:2078px;height:26px;background:#f0f0f0"></div>
<div class="a" style="left:470px;top:1068px;width:1320px;height:25px;background:#cdcdcd"></div>
<svg style="left:452px;top:1073px" width="8" height="12"><path d="M6.5 1 L1.5 6 L6.5 11" stroke="#606060" stroke-width="2" fill="none"/></svg>
<svg style="left:2510px;top:1074px" width="8" height="11"><path d="M1.5 1 L6 5.5 L1.5 10" stroke="#606060" stroke-width="2.2" fill="none"/></svg>
<div class="a" style="left:444px;top:1093px;width:2078px;height:2px;background:#fff"></div>
<svg style="left:698px;top:156px" width="114" height="33" viewBox="0 0 114 33"><path d="M0.5 33 V11 L10.5 1 H108 L112 5 V33 Z" fill="#c6d6f0"/><path d="M0.5 11 L10.5 1 H108 L112 5 V33" fill="none" stroke="#b9b9b9" stroke-width="2"/><path d="M2 11.5 L11 2.5 H108" fill="none" stroke="#f4f4f8" stroke-width="1" opacity="0.7"/></svg>
<svg style="left:712px;top:161px" width="19" height="23" viewBox="0 0 19 23"><path d="M1 1 H12.5 L17.5 6 V21.8 H1 Z" fill="url(#dg)"/><path d="M1 21.8 V1 H12.5" fill="none" stroke="#a9b9d2" stroke-width="1.4"/><path d="M12.5 1 L17.5 6 V21.8 H1" fill="none" stroke="#3e5474" stroke-width="1.6"/><path d="M12.5 1.5 V6 H17" fill="#7088b0" stroke="#3e5474" stroke-width="1"/><path d="M2.5 2.5 H8 L12 11 L8 19.5 H2.5 Z" fill="url(#dith)"/></svg>
<div class="tabt" style="left:746px">main.c</div>
<svg style="left:813px;top:156px" width="167" height="33" viewBox="0 0 167 33"><path d="M0.5 33 V11 L10.5 1 H161 L165 5 V33 Z" fill="#fcd983"/><path d="M0.5 11 L10.5 1 H161 L165 5 V33" fill="none" stroke="#b9b9b9" stroke-width="2"/><path d="M2 11.5 L11 2.5 H161" fill="none" stroke="#f4f4f8" stroke-width="1" opacity="0.7"/></svg>
<svg style="left:827px;top:161px" width="19" height="23" viewBox="0 0 19 23"><path d="M1 1 H12.5 L17.5 6 V21.8 H1 Z" fill="url(#dg)"/><path d="M1 21.8 V1 H12.5" fill="none" stroke="#a9b9d2" stroke-width="1.4"/><path d="M12.5 1 L17.5 6 V21.8 H1" fill="none" stroke="#3e5474" stroke-width="1.6"/><path d="M12.5 1.5 V6 H17" fill="#7088b0" stroke="#3e5474" stroke-width="1"/></svg>
<div class="tabt" style="left:861px">bsp_system.h</div>
<svg style="left:981px;top:156px" width="152" height="33" viewBox="0 0 152 33"><path d="M0.5 33 V11 L10.5 1 H146 L150 5 V33 Z" fill="#bccda3"/><path d="M0.5 11 L10.5 1 H146 L150 5 V33" fill="none" stroke="#b9b9b9" stroke-width="2"/><path d="M2 11.5 L11 2.5 H146" fill="none" stroke="#f4f4f8" stroke-width="1" opacity="0.7"/></svg>
<svg style="left:995px;top:161px" width="19" height="23" viewBox="0 0 19 23"><path d="M1 1 H12.5 L17.5 6 V21.8 H1 Z" fill="url(#dg)"/><path d="M1 21.8 V1 H12.5" fill="none" stroke="#a9b9d2" stroke-width="1.4"/><path d="M12.5 1 L17.5 6 V21.8 H1" fill="none" stroke="#3e5474" stroke-width="1.6"/><path d="M12.5 1.5 V6 H17" fill="#7088b0" stroke="#3e5474" stroke-width="1"/></svg>
<div class="tabt" style="left:1028px">scheduler.h</div>
<svg style="left:1134px;top:156px" width="131" height="33" viewBox="0 0 131 33"><path d="M0.5 33 V11 L10.5 1 H125 L129 5 V33 Z" fill="#f0a4a4"/><path d="M0.5 11 L10.5 1 H125 L129 5 V33" fill="none" stroke="#b9b9b9" stroke-width="2"/><path d="M2 11.5 L11 2.5 H125" fill="none" stroke="#f4f4f8" stroke-width="1" opacity="0.7"/></svg>
<svg style="left:1148px;top:161px" width="19" height="23" viewBox="0 0 19 23"><path d="M1 1 H12.5 L17.5 6 V21.8 H1 Z" fill="url(#dg)"/><path d="M1 21.8 V1 H12.5" fill="none" stroke="#a9b9d2" stroke-width="1.4"/><path d="M12.5 1 L17.5 6 V21.8 H1" fill="none" stroke="#3e5474" stroke-width="1.6"/><path d="M12.5 1.5 V6 H17" fill="#7088b0" stroke="#3e5474" stroke-width="1"/></svg>
<div class="tabt" style="left:1183px">system.h</div>
<svg style="left:1266px;top:156px" width="130" height="33" viewBox="0 0 130 33"><path d="M0.5 33 V11 L10.5 1 H124 L128 5 V33 Z" fill="#bcaadf"/><path d="M0.5 11 L10.5 1 H124 L128 5 V33" fill="none" stroke="#b9b9b9" stroke-width="2"/><path d="M2 11.5 L11 2.5 H124" fill="none" stroke="#f4f4f8" stroke-width="1" opacity="0.7"/></svg>
<svg style="left:1280px;top:161px" width="19" height="23" viewBox="0 0 19 23"><path d="M1 1 H12.5 L17.5 6 V21.8 H1 Z" fill="url(#dg)"/><path d="M1 21.8 V1 H12.5" fill="none" stroke="#a9b9d2" stroke-width="1.4"/><path d="M12.5 1 L17.5 6 V21.8 H1" fill="none" stroke="#3e5474" stroke-width="1.6"/><path d="M12.5 1.5 V6 H17" fill="#7088b0" stroke="#3e5474" stroke-width="1"/><path d="M2.5 2.5 H8 L12 11 L8 19.5 H2.5 Z" fill="url(#dith)"/></svg>
<div class="tabt" style="left:1315px">system.c</div>
<svg style="left:1397px;top:156px" width="150" height="33" viewBox="0 0 150 33"><path d="M0.5 33 V11 L10.5 1 H144 L148 5 V33 Z" fill="#9fc5b5"/><path d="M0.5 11 L10.5 1 H144 L148 5 V33" fill="none" stroke="#b9b9b9" stroke-width="2"/><path d="M2 11.5 L11 2.5 H144" fill="none" stroke="#f4f4f8" stroke-width="1" opacity="0.7"/></svg>
<svg style="left:1411px;top:161px" width="19" height="23" viewBox="0 0 19 23"><path d="M1 1 H12.5 L17.5 6 V21.8 H1 Z" fill="url(#dg)"/><path d="M1 21.8 V1 H12.5" fill="none" stroke="#a9b9d2" stroke-width="1.4"/><path d="M12.5 1 L17.5 6 V21.8 H1" fill="none" stroke="#3e5474" stroke-width="1.6"/><path d="M12.5 1.5 V6 H17" fill="#7088b0" stroke="#3e5474" stroke-width="1"/><path d="M2.5 2.5 H8 L12 11 L8 19.5 H2.5 Z" fill="url(#dith)"/></svg>
<div class="tabt" style="left:1444px">scheduler.c</div>
<svg style="left:1548px;top:156px" width="110" height="33" viewBox="0 0 110 33"><path d="M0.5 33 V11 L10.5 1 H104 L108 5 V33 Z" fill="#f7b98a"/><path d="M0.5 11 L10.5 1 H104 L108 5 V33" fill="none" stroke="#b9b9b9" stroke-width="2"/><path d="M2 11.5 L11 2.5 H104" fill="none" stroke="#f4f4f8" stroke-width="1" opacity="0.7"/></svg>
<svg style="left:1562px;top:161px" width="19" height="23" viewBox="0 0 19 23"><path d="M1 1 H12.5 L17.5 6 V21.8 H1 Z" fill="url(#dg)"/><path d="M1 21.8 V1 H12.5" fill="none" stroke="#a9b9d2" stroke-width="1.4"/><path d="M12.5 1 L17.5 6 V21.8 H1" fill="none" stroke="#3e5474" stroke-width="1.6"/><path d="M12.5 1.5 V6 H17" fill="#7088b0" stroke="#3e5474" stroke-width="1"/><path d="M2.5 2.5 H8 L12 11 L8 19.5 H2.5 Z" fill="url(#dith)"/></svg>
<div class="tabt" style="left:1596px">gpio.c</div>
<svg style="left:1659px;top:156px" width="181" height="33" viewBox="0 0 181 33"><path d="M0.5 33 V11 L10.5 1 H175 L179 5 V33 Z" fill="#d9afc6"/><path d="M0.5 11 L10.5 1 H175 L179 5 V33" fill="none" stroke="#b9b9b9" stroke-width="2"/><path d="M2 11.5 L11 2.5 H175" fill="none" stroke="#f4f4f8" stroke-width="1" opacity="0.7"/></svg>
<svg style="left:1673px;top:161px" width="19" height="23" viewBox="0 0 19 23"><path d="M1 1 H12.5 L17.5 6 V21.8 H1 Z" fill="url(#dg)"/><path d="M1 21.8 V1 H12.5" fill="none" stroke="#a9b9d2" stroke-width="1.4"/><path d="M12.5 1 L17.5 6 V21.8 H1" fill="none" stroke="#3e5474" stroke-width="1.6"/><path d="M12.5 1.5 V6 H17" fill="#7088b0" stroke="#3e5474" stroke-width="1"/><path d="M2.5 2.5 H8 L12 11 L8 19.5 H2.5 Z" fill="url(#dith)"/></svg>
<div class="tabt" style="left:1711px">stm32g4xx_it.c</div>
<svg style="left:1841px;top:156px" width="231" height="33" viewBox="0 0 231 33"><path d="M0.5 33 V11 L10.5 1 H225 L229 5 V33 Z" fill="#a7c5dc"/><path d="M0.5 11 L10.5 1 H225 L229 5 V33" fill="none" stroke="#b9b9b9" stroke-width="2"/><path d="M2 11.5 L11 2.5 H225" fill="none" stroke="#f4f4f8" stroke-width="1" opacity="0.7"/></svg>
<svg style="left:1855px;top:161px" width="19" height="23" viewBox="0 0 19 23"><path d="M1 1 H12.5 L17.5 6 V21.8 H1 Z" fill="url(#dg)"/><path d="M1 21.8 V1 H12.5" fill="none" stroke="#a9b9d2" stroke-width="1.4"/><path d="M12.5 1 L17.5 6 V21.8 H1" fill="none" stroke="#3e5474" stroke-width="1.6"/><path d="M12.5 1.5 V6 H17" fill="#7088b0" stroke="#3e5474" stroke-width="1"/><path d="M2.5 2.5 H8 L12 11 L8 19.5 H2.5 Z" fill="url(#dith)"/></svg>
<div class="tabt" style="left:1891px">stm32g4xx_hal_msp.c</div>
<svg style="left:2073px;top:156px" width="225" height="33" viewBox="0 0 225 33"><path d="M0.5 33 V11 L10.5 1 H219 L223 5 V33 Z" fill="#b4a8c4"/><path d="M0.5 11 L10.5 1 H219 L223 5 V33" fill="none" stroke="#b9b9b9" stroke-width="2"/><path d="M2 11.5 L11 2.5 H219" fill="none" stroke="#f4f4f8" stroke-width="1" opacity="0.7"/></svg>
<svg style="left:2087px;top:161px" width="19" height="23" viewBox="0 0 19 23"><path d="M1 1 H12.5 L17.5 6 V21.8 H1 Z" fill="url(#dg)"/><path d="M1 21.8 V1 H12.5" fill="none" stroke="#a9b9d2" stroke-width="1.4"/><path d="M12.5 1 L17.5 6 V21.8 H1" fill="none" stroke="#3e5474" stroke-width="1.6"/><path d="M12.5 1.5 V6 H17" fill="#7088b0" stroke="#3e5474" stroke-width="1"/><path d="M2.5 2.5 H8 L12 11 L8 19.5 H2.5 Z" fill="url(#dith)"/></svg>
<div class="tabt" style="left:2126px">system_stm32g4xx.c</div>
<svg style="left:2299px;top:156px" width="106" height="33" viewBox="0 0 106 33"><path d="M0.5 33 V11 L10.5 1 H100 L104 5 V33 Z" fill="#f6f77f"/><path d="M0.5 11 L10.5 1 H100 L104 5 V33" fill="none" stroke="#b9b9b9" stroke-width="2"/><path d="M2 11.5 L11 2.5 H100" fill="none" stroke="#f4f4f8" stroke-width="1" opacity="0.7"/></svg>
<svg style="left:2313px;top:161px" width="19" height="23" viewBox="0 0 19 23"><path d="M1 1 H12 L17.5 6.5 V21.5 H1 Z" fill="#fff" stroke="#111" stroke-width="1.5"/></svg>
<div class="tabt" style="left:2345px">test.h</div>
<svg style="left:441px;top:156px" width="258" height="36" viewBox="0 0 258 36"><path d="M0 33 L33 1 H251 Q255 1 255 5 V36 H0 Z" fill="#b4a6c0"/><path d="M2 32 L34 1.5 H251 Q255 1.5 255 5.5 V33" fill="none" stroke="#c4c4c4" stroke-width="2"/><path d="M4 32 L35 3 H251" fill="none" stroke="#e6e2ee" stroke-width="1"/></svg>
<svg style="left:480px;top:161px" width="19" height="23" viewBox="0 0 19 23"><path d="M1 1 H12.5 L17.5 6 V21.8 H1 Z" fill="url(#dg)"/><path d="M1 21.8 V1 H12.5" fill="none" stroke="#a9b9d2" stroke-width="1.4"/><path d="M12.5 1 L17.5 6 V21.8 H1" fill="none" stroke="#3e5474" stroke-width="1.6"/><path d="M12.5 1.5 V6 H17" fill="#7088b0" stroke="#3e5474" stroke-width="1"/><path d="M2.5 2.5 H8 L12 11 L8 19.5 H2.5 Z" fill="url(#dith)"/></svg><svg style="left:477px;top:172px" width="12" height="12" viewBox="0 0 12 12"><g fill="none" stroke="#000" stroke-width="1.9"><circle cx="2.8" cy="2.8" r="1.8"/><circle cx="8.8" cy="2.8" r="1.8"/><circle cx="2.8" cy="8.8" r="1.8"/><circle cx="8.8" cy="8.8" r="1.8"/><path d="M4.2 4.2 H7.4 V7.4 H4.2 Z"/></g></svg>
<div class="tabt" style="left:514px;font-weight:bold;font-size:16.3px;top:166px">stm32g4xx_hal_uart.c</div>
<div class="a" style="left:506px;top:185px;width:183px;height:3px;border-radius:2px;background:#000"></div>
<svg style="left:2507px;top:165px" width="11" height="12" viewBox="0 0 11 12"><path d="M0 0 H11 V2 H0 Z M0 4 H11 L5.5 11 Z" fill="#000"/></svg>
<div class="a" style="left:2px;top:188px;width:399px;height:849px;overflow:hidden">
<div class="a" style="left:153px;top:240px;width:246px;height:29px;background:#ededed"></div>
<div class="a" style="left:47px;top:22px;width:1px;height:16px;background:repeating-linear-gradient(#c8c8c8 0 1px,transparent 1px 3px)"></div>
<div class="a" style="left:77px;top:52px;width:1px;height:346px;background:repeating-linear-gradient(#c8c8c8 0 1px,transparent 1px 3px)"></div>
<div class="a" style="left:107px;top:82px;width:1px;height:22px;background:repeating-linear-gradient(#c8c8c8 0 1px,transparent 1px 3px)"></div>
<div class="a" style="left:107px;top:142px;width:1px;height:172px;background:repeating-linear-gradient(#c8c8c8 0 1px,transparent 1px 3px)"></div>
<div class="a" style="left:107px;top:412px;width:1px;height:437px;background:repeating-linear-gradient(#c8c8c8 0 1px,transparent 1px 3px)"></div>
<div class="a" style="left:25px;top:14px;width:10px;height:1px;background:repeating-linear-gradient(90deg,#c8c8c8 0 1px,transparent 1px 3px)"></div>
<svg style="left:13px;top:9px" width="12" height="12" viewBox="0 0 12 12"><rect x="0.5" y="0.5" width="11" height="11" rx="1" fill="url(#eg)" stroke="#a8a8a8"/><path d="M2.5 6 H9.5" stroke="#3b54a0" stroke-width="1.6"/></svg>
<svg style="left:34px;top:-2px" width="24" height="24" viewBox="0 0 24 24"><path d="M9.6 10.5 V19.5 H13.3" stroke="#6a7a90" stroke-width="1.6" fill="none"/><path d="M-1.2 9 L6 2 L11.7 6.3 L3.3 13.7 Z" fill="#f2c838" stroke="#c8980c" stroke-width="1"/><path d="M12.8 9 L18 5.3 L21.2 9 L16 13 Z" fill="#f070e8" stroke="#c040c0" stroke-width="1"/><path d="M12.3 18.4 L17 13.7 L21.2 17.9 L16 22.6 Z" fill="#6aaaf4" stroke="#2a70c8" stroke-width="1"/></svg>
<div class="tr" style="left:67px;top:8px">Project: Test_v2</div>
<div class="a" style="left:55px;top:44px;width:10px;height:1px;background:repeating-linear-gradient(90deg,#c8c8c8 0 1px,transparent 1px 3px)"></div>
<svg style="left:43px;top:39px" width="12" height="12" viewBox="0 0 12 12"><rect x="0.5" y="0.5" width="11" height="11" rx="1" fill="url(#eg)" stroke="#a8a8a8"/><path d="M2.5 6 H9.5" stroke="#3b54a0" stroke-width="1.6"/></svg>
<svg style="left:64px;top:33px" width="23" height="19" viewBox="0 0 23 19"><path d="M1 2 H8 L10 4 H19 V17 H1 Z" fill="url(#fg1)" stroke="#b8a060" stroke-width="1"/><path d="M5 8 H22 L18.5 18 H1.5 Z" fill="url(#fg2)" stroke="#8a6a20" stroke-width="1"/><path d="M1.5 18 H18.5" stroke="#222" stroke-width="1.5"/></svg>
<svg style="left:62px;top:41px" width="12" height="12" viewBox="0 0 12 12"><g fill="none" stroke="#000" stroke-width="1.9"><circle cx="2.8" cy="2.8" r="1.8"/><circle cx="8.8" cy="2.8" r="1.8"/><circle cx="2.8" cy="8.8" r="1.8"/><circle cx="8.8" cy="8.8" r="1.8"/><path d="M4.2 4.2 H7.4 V7.4 H4.2 Z"/></g></svg>
<div class="tr" style="left:97px;top:38px">Test_v2</div>
<div class="a" style="left:85px;top:74px;width:10px;height:1px;background:repeating-linear-gradient(90deg,#c8c8c8 0 1px,transparent 1px 3px)"></div>
<svg style="left:73px;top:69px" width="12" height="12" viewBox="0 0 12 12"><rect x="0.5" y="0.5" width="11" height="11" rx="1" fill="url(#eg)" stroke="#a8a8a8"/><path d="M2.5 6 H9.5" stroke="#3b54a0" stroke-width="1.6"/></svg>
<svg style="left:94px;top:63px" width="23" height="19" viewBox="0 0 23 19"><path d="M1 2 H8 L10 4 H19 V17 H1 Z" fill="url(#fg1)" stroke="#b8a060" stroke-width="1"/><path d="M5 8 H22 L18.5 18 H1.5 Z" fill="url(#fg2)" stroke="#8a6a20" stroke-width="1"/><path d="M1.5 18 H18.5" stroke="#222" stroke-width="1.5"/></svg>
<div class="tr" style="left:127px;top:68px">Application/MDK-ARM</div>
<div class="a" style="left:108px;top:104px;width:17px;height:1px;background:repeating-linear-gradient(90deg,#c8c8c8 0 1px,transparent 1px 3px)"></div>
<svg style="left:125px;top:91px" width="19" height="23" viewBox="0 0 19 23"><path d="M1 1 H12.5 L17.5 6 V21.8 H1 Z" fill="url(#dg)"/><path d="M1 21.8 V1 H12.5" fill="none" stroke="#a9b9d2" stroke-width="1.4"/><path d="M12.5 1 L17.5 6 V21.8 H1" fill="none" stroke="#3e5474" stroke-width="1.6"/><path d="M12.5 1.5 V6 H17" fill="#7088b0" stroke="#3e5474" stroke-width="1"/><path d="M2.5 2.5 H8 L12 11 L8 19.5 H2.5 Z" fill="url(#dith)"/></svg>
<div class="tr" style="left:157px;top:98px">startup_stm32g431xx.s</div>
<div class="a" style="left:85px;top:134px;width:10px;height:1px;background:repeating-linear-gradient(90deg,#c8c8c8 0 1px,transparent 1px 3px)"></div>
<svg style="left:73px;top:129px" width="12" height="12" viewBox="0 0 12 12"><rect x="0.5" y="0.5" width="11" height="11" rx="1" fill="url(#eg)" stroke="#a8a8a8"/><path d="M2.5 6 H9.5" stroke="#3b54a0" stroke-width="1.6"/></svg>
<svg style="left:94px;top:123px" width="23" height="19" viewBox="0 0 23 19"><path d="M1 2 H8 L10 4 H19 V17 H1 Z" fill="url(#fg1)" stroke="#b8a060" stroke-width="1"/><path d="M5 8 H22 L18.5 18 H1.5 Z" fill="url(#fg2)" stroke="#8a6a20" stroke-width="1"/><path d="M1.5 18 H18.5" stroke="#222" stroke-width="1.5"/></svg>
<div class="tr" style="left:127px;top:128px">Application/User/Core</div>
<div class="a" style="left:115px;top:164px;width:10px;height:1px;background:repeating-linear-gradient(90deg,#c8c8c8 0 1px,transparent 1px 3px)"></div>
<svg style="left:103px;top:159px" width="12" height="12" viewBox="0 0 12 12"><rect x="0.5" y="0.5" width="11" height="11" rx="1" fill="url(#eg)" stroke="#a8a8a8"/><path d="M2.5 6 H9.5" stroke="#3b54a0" stroke-width="1.6"/><path d="M6 2.5 V9.5" stroke="#3b54a0" stroke-width="1.6"/></svg>
<svg style="left:125px;top:151px" width="19" height="23" viewBox="0 0 19 23"><path d="M1 1 H12.5 L17.5 6 V21.8 H1 Z" fill="url(#dg)"/><path d="M1 21.8 V1 H12.5" fill="none" stroke="#a9b9d2" stroke-width="1.4"/><path d="M12.5 1 L17.5 6 V21.8 H1" fill="none" stroke="#3e5474" stroke-width="1.6"/><path d="M12.5 1.5 V6 H17" fill="#7088b0" stroke="#3e5474" stroke-width="1"/><path d="M2.5 2.5 H8 L12 11 L8 19.5 H2.5 Z" fill="url(#dith)"/></svg>
<div class="tr" style="left:157px;top:158px">main.c</div>
<div class="a" style="left:115px;top:194px;width:10px;height:1px;background:repeating-linear-gradient(90deg,#c8c8c8 0 1px,transparent 1px 3px)"></div>
<svg style="left:103px;top:189px" width="12" height="12" viewBox="0 0 12 12"><rect x="0.5" y="0.5" width="11" height="11" rx="1" fill="url(#eg)" stroke="#a8a8a8"/><path d="M2.5 6 H9.5" stroke="#3b54a0" stroke-width="1.6"/><path d="M6 2.5 V9.5" stroke="#3b54a0" stroke-width="1.6"/></svg>
<svg style="left:125px;top:181px" width="19" height="23" viewBox="0 0 19 23"><path d="M1 1 H12.5 L17.5 6 V21.8 H1 Z" fill="url(#dg)"/><path d="M1 21.8 V1 H12.5" fill="none" stroke="#a9b9d2" stroke-width="1.4"/><path d="M12.5 1 L17.5 6 V21.8 H1" fill="none" stroke="#3e5474" stroke-width="1.6"/><path d="M12.5 1.5 V6 H17" fill="#7088b0" stroke="#3e5474" stroke-width="1"/><path d="M2.5 2.5 H8 L12 11 L8 19.5 H2.5 Z" fill="url(#dith)"/></svg>
<div class="tr" style="left:157px;top:188px">gpio.c</div>
<div class="a" style="left:108px;top:224px;width:17px;height:1px;background:repeating-linear-gradient(90deg,#c8c8c8 0 1px,transparent 1px 3px)"></div>
<svg style="left:125px;top:211px" width="19" height="23" viewBox="0 0 19 23"><path d="M1 1 H12.5 L17.5 6 V21.8 H1 Z" fill="url(#dg)"/><path d="M1 21.8 V1 H12.5" fill="none" stroke="#a9b9d2" stroke-width="1.4"/><path d="M12.5 1 L17.5 6 V21.8 H1" fill="none" stroke="#3e5474" stroke-width="1.6"/><path d="M12.5 1.5 V6 H17" fill="#7088b0" stroke="#3e5474" stroke-width="1"/><path d="M2.5 2.5 H8 L12 11 L8 19.5 H2.5 Z" fill="url(#dith)"/></svg><svg style="left:122px;top:222px" width="12" height="12" viewBox="0 0 12 12"><g fill="none" stroke="#000" stroke-width="1.9"><circle cx="2.8" cy="2.8" r="1.8"/><circle cx="8.8" cy="2.8" r="1.8"/><circle cx="2.8" cy="8.8" r="1.8"/><circle cx="8.8" cy="8.8" r="1.8"/><path d="M4.2 4.2 H7.4 V7.4 H4.2 Z"/></g></svg>
<div class="tr" style="left:157px;top:218px">dma.c</div>
<div class="a" style="left:108px;top:254px;width:17px;height:1px;background:repeating-linear-gradient(90deg,#c8c8c8 0 1px,transparent 1px 3px)"></div>
<svg style="left:125px;top:241px" width="19" height="23" viewBox="0 0 19 23"><path d="M1 1 H12.5 L17.5 6 V21.8 H1 Z" fill="url(#dg)"/><path d="M1 21.8 V1 H12.5" fill="none" stroke="#a9b9d2" stroke-width="1.4"/><path d="M12.5 1 L17.5 6 V21.8 H1" fill="none" stroke="#3e5474" stroke-width="1.6"/><path d="M12.5 1.5 V6 H17" fill="#7088b0" stroke="#3e5474" stroke-width="1"/><path d="M2.5 2.5 H8 L12 11 L8 19.5 H2.5 Z" fill="url(#dith)"/></svg><svg style="left:122px;top:252px" width="12" height="12" viewBox="0 0 12 12"><g fill="none" stroke="#000" stroke-width="1.9"><circle cx="2.8" cy="2.8" r="1.8"/><circle cx="8.8" cy="2.8" r="1.8"/><circle cx="2.8" cy="8.8" r="1.8"/><circle cx="8.8" cy="8.8" r="1.8"/><path d="M4.2 4.2 H7.4 V7.4 H4.2 Z"/></g></svg>
<div class="tr" style="left:157px;top:248px">usart.c</div>
<div class="a" style="left:115px;top:284px;width:10px;height:1px;background:repeating-linear-gradient(90deg,#c8c8c8 0 1px,transparent 1px 3px)"></div>
<svg style="left:103px;top:279px" width="12" height="12" viewBox="0 0 12 12"><rect x="0.5" y="0.5" width="11" height="11" rx="1" fill="url(#eg)" stroke="#a8a8a8"/><path d="M2.5 6 H9.5" stroke="#3b54a0" stroke-width="1.6"/><path d="M6 2.5 V9.5" stroke="#3b54a0" stroke-width="1.6"/></svg>
<svg style="left:125px;top:271px" width="19" height="23" viewBox="0 0 19 23"><path d="M1 1 H12.5 L17.5 6 V21.8 H1 Z" fill="url(#dg)"/><path d="M1 21.8 V1 H12.5" fill="none" stroke="#a9b9d2" stroke-width="1.4"/><path d="M12.5 1 L17.5 6 V21.8 H1" fill="none" stroke="#3e5474" stroke-width="1.6"/><path d="M12.5 1.5 V6 H17" fill="#7088b0" stroke="#3e5474" stroke-width="1"/><path d="M2.5 2.5 H8 L12 11 L8 19.5 H2.5 Z" fill="url(#dith)"/></svg>
<div class="tr" style="left:157px;top:278px">stm32g4xx_it.c</div>
<div class="a" style="left:115px;top:314px;width:10px;height:1px;background:repeating-linear-gradient(90deg,#c8c8c8 0 1px,transparent 1px 3px)"></div>
<svg style="left:103px;top:309px" width="12" height="12" viewBox="0 0 12 12"><rect x="0.5" y="0.5" width="11" height="11" rx="1" fill="url(#eg)" stroke="#a8a8a8"/><path d="M2.5 6 H9.5" stroke="#3b54a0" stroke-width="1.6"/><path d="M6 2.5 V9.5" stroke="#3b54a0" stroke-width="1.6"/></svg>
<svg style="left:125px;top:301px" width="19" height="23" viewBox="0 0 19 23"><path d="M1 1 H12.5 L17.5 6 V21.8 H1 Z" fill="url(#dg)"/><path d="M1 21.8 V1 H12.5" fill="none" stroke="#a9b9d2" stroke-width="1.4"/><path d="M12.5 1 L17.5 6 V21.8 H1" fill="none" stroke="#3e5474" stroke-width="1.6"/><path d="M12.5 1.5 V6 H17" fill="#7088b0" stroke="#3e5474" stroke-width="1"/><path d="M2.5 2.5 H8 L12 11 L8 19.5 H2.5 Z" fill="url(#dith)"/></svg>
<div class="tr" style="left:157px;top:308px">stm32g4xx_hal_msp.c</div>
<div class="a" style="left:85px;top:344px;width:10px;height:1px;background:repeating-linear-gradient(90deg,#c8c8c8 0 1px,transparent 1px 3px)"></div>
<svg style="left:73px;top:339px" width="12" height="12" viewBox="0 0 12 12"><rect x="0.5" y="0.5" width="11" height="11" rx="1" fill="url(#eg)" stroke="#a8a8a8"/><path d="M2.5 6 H9.5" stroke="#3b54a0" stroke-width="1.6"/><path d="M6 2.5 V9.5" stroke="#3b54a0" stroke-width="1.6"/></svg>
<svg style="left:94px;top:333px" width="22" height="19" viewBox="0 0 22 19"><path d="M1 1.5 H8 L9.5 3 H20.5 V17.5 H1 Z" fill="url(#fg3)" stroke="#a08040" stroke-width="1"/><path d="M1 17.5 H20.5" stroke="#222" stroke-width="1.5"/></svg>
<div class="tr" style="left:127px;top:338px">Drivers/STM32G4xx_HAL_Driver</div>
<div class="a" style="left:85px;top:374px;width:10px;height:1px;background:repeating-linear-gradient(90deg,#c8c8c8 0 1px,transparent 1px 3px)"></div>
<svg style="left:73px;top:369px" width="12" height="12" viewBox="0 0 12 12"><rect x="0.5" y="0.5" width="11" height="11" rx="1" fill="url(#eg)" stroke="#a8a8a8"/><path d="M2.5 6 H9.5" stroke="#3b54a0" stroke-width="1.6"/><path d="M6 2.5 V9.5" stroke="#3b54a0" stroke-width="1.6"/></svg>
<svg style="left:94px;top:363px" width="22" height="19" viewBox="0 0 22 19"><path d="M1 1.5 H8 L9.5 3 H20.5 V17.5 H1 Z" fill="url(#fg3)" stroke="#a08040" stroke-width="1"/><path d="M1 17.5 H20.5" stroke="#222" stroke-width="1.5"/></svg>
<div class="tr" style="left:127px;top:368px">Drivers/CMSIS</div>
<div class="a" style="left:85px;top:404px;width:10px;height:1px;background:repeating-linear-gradient(90deg,#c8c8c8 0 1px,transparent 1px 3px)"></div>
<svg style="left:73px;top:399px" width="12" height="12" viewBox="0 0 12 12"><rect x="0.5" y="0.5" width="11" height="11" rx="1" fill="url(#eg)" stroke="#a8a8a8"/><path d="M2.5 6 H9.5" stroke="#3b54a0" stroke-width="1.6"/></svg>
<svg style="left:94px;top:393px" width="23" height="19" viewBox="0 0 23 19"><path d="M1 2 H8 L10 4 H19 V17 H1 Z" fill="url(#fg1)" stroke="#b8a060" stroke-width="1"/><path d="M5 8 H22 L18.5 18 H1.5 Z" fill="url(#fg2)" stroke="#8a6a20" stroke-width="1"/><path d="M1.5 18 H18.5" stroke="#222" stroke-width="1.5"/></svg>
<div class="tr" style="left:127px;top:398px">Hardware</div>
<div class="a" style="left:108px;top:434px;width:17px;height:1px;background:repeating-linear-gradient(90deg,#c8c8c8 0 1px,transparent 1px 3px)"></div>
<svg style="left:125px;top:421px" width="19" height="23" viewBox="0 0 19 23"><path d="M1 1 H12.5 L17.5 6 V21.8 H1 Z" fill="url(#dg)"/><path d="M1 21.8 V1 H12.5" fill="none" stroke="#a9b9d2" stroke-width="1.4"/><path d="M12.5 1 L17.5 6 V21.8 H1" fill="none" stroke="#3e5474" stroke-width="1.6"/><path d="M12.5 1.5 V6 H17" fill="#7088b0" stroke="#3e5474" stroke-width="1"/></svg>
<div class="tr" style="left:157px;top:428px">bsp_system.h</div>
<div class="a" style="left:115px;top:464px;width:10px;height:1px;background:repeating-linear-gradient(90deg,#c8c8c8 0 1px,transparent 1px 3px)"></div>
<svg style="left:103px;top:459px" width="12" height="12" viewBox="0 0 12 12"><rect x="0.5" y="0.5" width="11" height="11" rx="1" fill="url(#eg)" stroke="#a8a8a8"/><path d="M2.5 6 H9.5" stroke="#3b54a0" stroke-width="1.6"/><path d="M6 2.5 V9.5" stroke="#3b54a0" stroke-width="1.6"/></svg>
<svg style="left:125px;top:451px" width="19" height="23" viewBox="0 0 19 23"><path d="M1 1 H12.5 L17.5 6 V21.8 H1 Z" fill="url(#dg)"/><path d="M1 21.8 V1 H12.5" fill="none" stroke="#a9b9d2" stroke-width="1.4"/><path d="M12.5 1 L17.5 6 V21.8 H1" fill="none" stroke="#3e5474" stroke-width="1.6"/><path d="M12.5 1.5 V6 H17" fill="#7088b0" stroke="#3e5474" stroke-width="1"/><path d="M2.5 2.5 H8 L12 11 L8 19.5 H2.5 Z" fill="url(#dith)"/></svg>
<div class="tr" style="left:157px;top:458px">scheduler.c</div>
<div class="a" style="left:108px;top:494px;width:17px;height:1px;background:repeating-linear-gradient(90deg,#c8c8c8 0 1px,transparent 1px 3px)"></div>
<svg style="left:125px;top:481px" width="19" height="23" viewBox="0 0 19 23"><path d="M1 1 H12.5 L17.5 6 V21.8 H1 Z" fill="url(#dg)"/><path d="M1 21.8 V1 H12.5" fill="none" stroke="#a9b9d2" stroke-width="1.4"/><path d="M12.5 1 L17.5 6 V21.8 H1" fill="none" stroke="#3e5474" stroke-width="1.6"/><path d="M12.5 1.5 V6 H17" fill="#7088b0" stroke="#3e5474" stroke-width="1"/></svg>
<div class="tr" style="left:157px;top:488px">scheduler.h</div>
<div class="a" style="left:115px;top:524px;width:10px;height:1px;background:repeating-linear-gradient(90deg,#c8c8c8 0 1px,transparent 1px 3px)"></div>
<svg style="left:103px;top:519px" width="12" height="12" viewBox="0 0 12 12"><rect x="0.5" y="0.5" width="11" height="11" rx="1" fill="url(#eg)" stroke="#a8a8a8"/><path d="M2.5 6 H9.5" stroke="#3b54a0" stroke-width="1.6"/><path d="M6 2.5 V9.5" stroke="#3b54a0" stroke-width="1.6"/></svg>
<svg style="left:125px;top:511px" width="19" height="23" viewBox="0 0 19 23"><path d="M1 1 H12.5 L17.5 6 V21.8 H1 Z" fill="url(#dg)"/><path d="M1 21.8 V1 H12.5" fill="none" stroke="#a9b9d2" stroke-width="1.4"/><path d="M12.5 1 L17.5 6 V21.8 H1" fill="none" stroke="#3e5474" stroke-width="1.6"/><path d="M12.5 1.5 V6 H17" fill="#7088b0" stroke="#3e5474" stroke-width="1"/><path d="M2.5 2.5 H8 L12 11 L8 19.5 H2.5 Z" fill="url(#dith)"/></svg>
<div class="tr" style="left:157px;top:518px">system.c</div>
<div class="a" style="left:108px;top:554px;width:17px;height:1px;background:repeating-linear-gradient(90deg,#c8c8c8 0 1px,transparent 1px 3px)"></div>
<svg style="left:125px;top:541px" width="19" height="23" viewBox="0 0 19 23"><path d="M1 1 H12.5 L17.5 6 V21.8 H1 Z" fill="url(#dg)"/><path d="M1 21.8 V1 H12.5" fill="none" stroke="#a9b9d2" stroke-width="1.4"/><path d="M12.5 1 L17.5 6 V21.8 H1" fill="none" stroke="#3e5474" stroke-width="1.6"/><path d="M12.5 1.5 V6 H17" fill="#7088b0" stroke="#3e5474" stroke-width="1"/></svg>
<div class="tr" style="left:157px;top:548px">system.h</div>
<div class="a" style="left:115px;top:584px;width:10px;height:1px;background:repeating-linear-gradient(90deg,#c8c8c8 0 1px,transparent 1px 3px)"></div>
<svg style="left:103px;top:579px" width="12" height="12" viewBox="0 0 12 12"><rect x="0.5" y="0.5" width="11" height="11" rx="1" fill="url(#eg)" stroke="#a8a8a8"/><path d="M2.5 6 H9.5" stroke="#3b54a0" stroke-width="1.6"/><path d="M6 2.5 V9.5" stroke="#3b54a0" stroke-width="1.6"/></svg>
<svg style="left:125px;top:571px" width="19" height="23" viewBox="0 0 19 23"><path d="M1 1 H12.5 L17.5 6 V21.8 H1 Z" fill="url(#dg)"/><path d="M1 21.8 V1 H12.5" fill="none" stroke="#a9b9d2" stroke-width="1.4"/><path d="M12.5 1 L17.5 6 V21.8 H1" fill="none" stroke="#3e5474" stroke-width="1.6"/><path d="M12.5 1.5 V6 H17" fill="#7088b0" stroke="#3e5474" stroke-width="1"/><path d="M2.5 2.5 H8 L12 11 L8 19.5 H2.5 Z" fill="url(#dith)"/></svg>
<div class="tr" style="left:157px;top:578px">led_app.c</div>
<div class="a" style="left:108px;top:614px;width:17px;height:1px;background:repeating-linear-gradient(90deg,#c8c8c8 0 1px,transparent 1px 3px)"></div>
<svg style="left:125px;top:601px" width="19" height="23" viewBox="0 0 19 23"><path d="M1 1 H12.5 L17.5 6 V21.8 H1 Z" fill="url(#dg)"/><path d="M1 21.8 V1 H12.5" fill="none" stroke="#a9b9d2" stroke-width="1.4"/><path d="M12.5 1 L17.5 6 V21.8 H1" fill="none" stroke="#3e5474" stroke-width="1.6"/><path d="M12.5 1.5 V6 H17" fill="#7088b0" stroke="#3e5474" stroke-width="1"/></svg>
<div class="tr" style="left:157px;top:608px">led_app.h</div>
<div class="a" style="left:108px;top:644px;width:17px;height:1px;background:repeating-linear-gradient(90deg,#c8c8c8 0 1px,transparent 1px 3px)"></div>
<svg style="left:125px;top:631px" width="19" height="23" viewBox="0 0 19 23"><path d="M1 1 H12.5 L17.5 6 V21.8 H1 Z" fill="url(#dg)"/><path d="M1 21.8 V1 H12.5" fill="none" stroke="#a9b9d2" stroke-width="1.4"/><path d="M12.5 1 L17.5 6 V21.8 H1" fill="none" stroke="#3e5474" stroke-width="1.6"/><path d="M12.5 1.5 V6 H17" fill="#7088b0" stroke="#3e5474" stroke-width="1"/></svg>
<div class="tr" style="left:157px;top:638px">fonts.h</div>
<div class="a" style="left:115px;top:674px;width:10px;height:1px;background:repeating-linear-gradient(90deg,#c8c8c8 0 1px,transparent 1px 3px)"></div>
<svg style="left:103px;top:669px" width="12" height="12" viewBox="0 0 12 12"><rect x="0.5" y="0.5" width="11" height="11" rx="1" fill="url(#eg)" stroke="#a8a8a8"/><path d="M2.5 6 H9.5" stroke="#3b54a0" stroke-width="1.6"/><path d="M6 2.5 V9.5" stroke="#3b54a0" stroke-width="1.6"/></svg>
<svg style="left:125px;top:661px" width="19" height="23" viewBox="0 0 19 23"><path d="M1 1 H12.5 L17.5 6 V21.8 H1 Z" fill="url(#dg)"/><path d="M1 21.8 V1 H12.5" fill="none" stroke="#a9b9d2" stroke-width="1.4"/><path d="M12.5 1 L17.5 6 V21.8 H1" fill="none" stroke="#3e5474" stroke-width="1.6"/><path d="M12.5 1.5 V6 H17" fill="#7088b0" stroke="#3e5474" stroke-width="1"/><path d="M2.5 2.5 H8 L12 11 L8 19.5 H2.5 Z" fill="url(#dith)"/></svg>
<div class="tr" style="left:157px;top:668px">key_app.c</div>
<div class="a" style="left:108px;top:704px;width:17px;height:1px;background:repeating-linear-gradient(90deg,#c8c8c8 0 1px,transparent 1px 3px)"></div>
<svg style="left:125px;top:691px" width="19" height="23" viewBox="0 0 19 23"><path d="M1 1 H12.5 L17.5 6 V21.8 H1 Z" fill="url(#dg)"/><path d="M1 21.8 V1 H12.5" fill="none" stroke="#a9b9d2" stroke-width="1.4"/><path d="M12.5 1 L17.5 6 V21.8 H1" fill="none" stroke="#3e5474" stroke-width="1.6"/><path d="M12.5 1.5 V6 H17" fill="#7088b0" stroke="#3e5474" stroke-width="1"/></svg>
<div class="tr" style="left:157px;top:698px">key_app.h</div>
<div class="a" style="left:115px;top:734px;width:10px;height:1px;background:repeating-linear-gradient(90deg,#c8c8c8 0 1px,transparent 1px 3px)"></div>
<svg style="left:103px;top:729px" width="12" height="12" viewBox="0 0 12 12"><rect x="0.5" y="0.5" width="11" height="11" rx="1" fill="url(#eg)" stroke="#a8a8a8"/><path d="M2.5 6 H9.5" stroke="#3b54a0" stroke-width="1.6"/><path d="M6 2.5 V9.5" stroke="#3b54a0" stroke-width="1.6"/></svg>
<svg style="left:125px;top:721px" width="19" height="23" viewBox="0 0 19 23"><path d="M1 1 H12.5 L17.5 6 V21.8 H1 Z" fill="url(#dg)"/><path d="M1 21.8 V1 H12.5" fill="none" stroke="#a9b9d2" stroke-width="1.4"/><path d="M12.5 1 L17.5 6 V21.8 H1" fill="none" stroke="#3e5474" stroke-width="1.6"/><path d="M12.5 1.5 V6 H17" fill="#7088b0" stroke="#3e5474" stroke-width="1"/><path d="M2.5 2.5 H8 L12 11 L8 19.5 H2.5 Z" fill="url(#dith)"/></svg>
<div class="tr" style="left:157px;top:728px">lcd.c</div>
<div class="a" style="left:108px;top:764px;width:17px;height:1px;background:repeating-linear-gradient(90deg,#c8c8c8 0 1px,transparent 1px 3px)"></div>
<svg style="left:125px;top:751px" width="19" height="23" viewBox="0 0 19 23"><path d="M1 1 H12.5 L17.5 6 V21.8 H1 Z" fill="url(#dg)"/><path d="M1 21.8 V1 H12.5" fill="none" stroke="#a9b9d2" stroke-width="1.4"/><path d="M12.5 1 L17.5 6 V21.8 H1" fill="none" stroke="#3e5474" stroke-width="1.6"/><path d="M12.5 1.5 V6 H17" fill="#7088b0" stroke="#3e5474" stroke-width="1"/></svg>
<div class="tr" style="left:157px;top:758px">lcd.h</div>
<div class="a" style="left:115px;top:794px;width:10px;height:1px;background:repeating-linear-gradient(90deg,#c8c8c8 0 1px,transparent 1px 3px)"></div>
<svg style="left:103px;top:789px" width="12" height="12" viewBox="0 0 12 12"><rect x="0.5" y="0.5" width="11" height="11" rx="1" fill="url(#eg)" stroke="#a8a8a8"/><path d="M2.5 6 H9.5" stroke="#3b54a0" stroke-width="1.6"/><path d="M6 2.5 V9.5" stroke="#3b54a0" stroke-width="1.6"/></svg>
<svg style="left:125px;top:781px" width="19" height="23" viewBox="0 0 19 23"><path d="M1 1 H12.5 L17.5 6 V21.8 H1 Z" fill="url(#dg)"/><path d="M1 21.8 V1 H12.5" fill="none" stroke="#a9b9d2" stroke-width="1.4"/><path d="M12.5 1 L17.5 6 V21.8 H1" fill="none" stroke="#3e5474" stroke-width="1.6"/><path d="M12.5 1.5 V6 H17" fill="#7088b0" stroke="#3e5474" stroke-width="1"/><path d="M2.5 2.5 H8 L12 11 L8 19.5 H2.5 Z" fill="url(#dith)"/></svg>
<div class="tr" style="left:157px;top:788px">lcd_app.c</div>
<div class="a" style="left:108px;top:824px;width:17px;height:1px;background:repeating-linear-gradient(90deg,#c8c8c8 0 1px,transparent 1px 3px)"></div>
<svg style="left:125px;top:811px" width="19" height="23" viewBox="0 0 19 23"><path d="M1 1 H12.5 L17.5 6 V21.8 H1 Z" fill="url(#dg)"/><path d="M1 21.8 V1 H12.5" fill="none" stroke="#a9b9d2" stroke-width="1.4"/><path d="M12.5 1 L17.5 6 V21.8 H1" fill="none" stroke="#3e5474" stroke-width="1.6"/><path d="M12.5 1.5 V6 H17" fill="#7088b0" stroke="#3e5474" stroke-width="1"/></svg>
<div class="tr" style="left:157px;top:818px">lcd_app.h</div>
<div class="a" style="left:108px;top:854px;width:17px;height:1px;background:repeating-linear-gradient(90deg,#c8c8c8 0 1px,transparent 1px 3px)"></div>
<svg style="left:125px;top:841px" width="19" height="23" viewBox="0 0 19 23"><path d="M1 1 H12.5 L17.5 6 V21.8 H1 Z" fill="url(#dg)"/><path d="M1 21.8 V1 H12.5" fill="none" stroke="#a9b9d2" stroke-width="1.4"/><path d="M12.5 1 L17.5 6 V21.8 H1" fill="none" stroke="#3e5474" stroke-width="1.6"/><path d="M12.5 1.5 V6 H17" fill="#7088b0" stroke="#3e5474" stroke-width="1"/><path d="M2.5 2.5 H8 L12 11 L8 19.5 H2.5 Z" fill="url(#dith)"/></svg>
</div>
<div class="a" style="left:401px;top:188px;width:26px;height:849px;background:#f4f4f4"></div>
<div class="a" style="left:401px;top:189px;width:25px;height:24px;background:#f0f0f0;border-right:2px solid #6a6a6a"></div>
<svg style="left:406px;top:197px" width="14" height="8"><path d="M0 7.5 L7 0 L14 7.5 Z" fill="#000"/></svg>
<div class="a" style="left:401px;top:213px;width:25px;height:720px;background:#efefef;border-right:3px solid #6e6e6e;border-bottom:3px solid #6e6e6e;border-left:1px solid #fff;border-top:2px solid #8a8a8a"></div>
<div class="a" style="left:5px;top:1037px;width:424px;height:25px;background:#f6f6f6"></div>
<div class="a" style="left:5px;top:1037px;width:24px;height:24px;background:#f0f0f0"></div>
<svg style="left:11px;top:1043px" width="8" height="13"><path d="M7.5 0 L0 6.5 L7.5 13 Z" fill="#000"/></svg>
<div class="a" style="left:29px;top:1037px;width:296px;height:25px;background:#efefef;border-right:3px solid #6e6e6e;border-bottom:3px solid #6e6e6e;border-left:1px solid #fff;border-top:1px solid #fff"></div>
<div class="a" style="left:377px;top:1037px;width:24px;height:25px;background:#f0f0f0;border-right:1px solid #6e6e6e;border-bottom:2px solid #6e6e6e"></div>
<svg style="left:385px;top:1043px" width="8" height="13"><path d="M0 0 L7.5 6.5 L0 13 Z" fill="#000"/></svg>
<div class="a" style="left:401px;top:1037px;width:25px;height:25px;background:#f0f0f0;border-right:2px solid #6e6e6e;border-bottom:2px solid #6e6e6e"></div>
<svg style="left:406px;top:1046px" width="14" height="8"><path d="M0 0 H14 L7 7.5 Z" fill="#000"/></svg>
<div class="a" style="left:2px;top:1064px;width:428px;height:36px;background:#f5f5f5"></div>
<div class="a" style="left:101px;top:1064px;width:329px;height:2px;background:#111"></div>
<div class="a" style="left:4px;top:1064px;width:98px;height:35px;background:#f0f0f0;border-right:2px solid #111;border-bottom:2px solid #111"></div>
<svg style="left:11px;top:1070px" width="21" height="20" viewBox="0 0 21 20"><rect x="0.5" y="0.5" width="20" height="19" fill="#f4f4f0" stroke="#4d6288"/><rect x="1" y="1" width="19" height="3" fill="#7aa4e8"/><g stroke="#c8c800" stroke-width="1.6"><path d="M4 7 V17 M7 9 H17 M7 12 H17 M7 15 H17"/></g></svg>
<div class="t" style="left:37px;top:1075px;font-size:17px;color:#111">Project</div>
<svg style="left:108px;top:1068px" width="26" height="25" viewBox="0 0 26 25"><path d="M1 12 L12 1 L24 8 L13 19 Z" fill="#9a80e8" stroke="#7020e0" stroke-width="1.5"/><circle cx="15" cy="17" r="6.5" fill="#eef" stroke="#3a60d0" stroke-width="2"/><text x="12" y="21" font-size="9" font-family="Liberation Sans" fill="#3a60d0">?</text></svg>
<div class="t" style="left:136px;top:1073px;font-size:17.5px;color:#8a8a8a">Books</div>
<div class="a" style="left:191px;top:1070px;width:1px;height:22px;background:#c0c0c0"></div>
<div class="t" style="left:202px;top:1071px;font-size:17px;color:#222">{ }</div>
<div class="t" style="left:225px;top:1073px;font-size:17.5px;color:#8a8a8a">Functions</div>
<div class="a" style="left:306px;top:1070px;width:1px;height:22px;background:#c0c0c0"></div>
<div class="t" style="left:313px;top:1071px;font-size:17px;color:#222">{}</div>
<svg style="left:326px;top:1083px" width="11" height="9"><path d="M0 3 H5 V0 L10 4.5 L5 9 V6 H0 Z" fill="#2a60d8"/></svg>
<div class="t" style="left:340px;top:1073px;font-size:17.5px;color:#8a8a8a">Templates</div>
<div class="a" style="left:421px;top:1070px;width:1px;height:22px;background:#c0c0c0"></div>
<div class="a hdr" style="left:0;top:1106px;width:2522px;height:27px"></div>
<div class="t" style="left:7px;top:1114px;font-size:16px">Build Output</div>
<div class="a" style="left:0;top:1136px;width:2522px;height:3px;background:#707070"></div>
<svg style="left:2513px;top:1114px" width="11" height="13" viewBox="0 0 11 13"><path d="M3 1 H8 V8 H3 Z" fill="#dde6f0" stroke="#000" stroke-width="1.6"/><path d="M0 8.5 H11" stroke="#000" stroke-width="2"/><path d="M5.5 9 V13" stroke="#000" stroke-width="1.6"/></svg>
</body></html>
